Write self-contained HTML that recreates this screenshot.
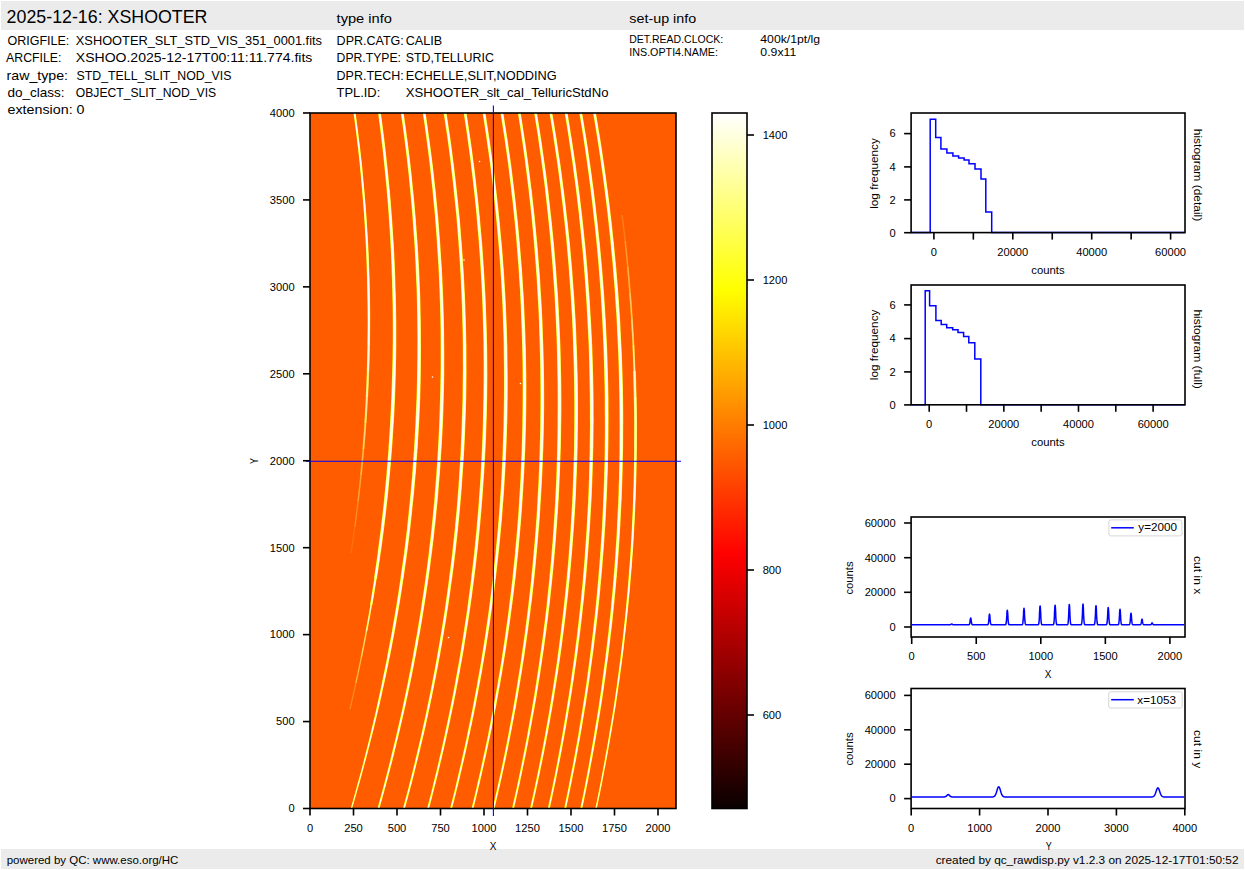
<!DOCTYPE html>
<html><head><meta charset="utf-8"><title>XSHOOTER raw display</title>
<style>html,body{margin:0;padding:0;background:#fff;width:1245px;height:870px;overflow:hidden}
svg text{font-family:"Liberation Sans",sans-serif;}</style></head>
<body>
<svg width="1245" height="870" viewBox="0 0 1245 870" style="display:block"><rect x="1" y="1" width="1243" height="29" fill="#ebebeb"/>
<rect x="1" y="849" width="1243" height="20" fill="#ebebeb"/>
<text x="6.60" y="22.80" font-size="17.66" textLength="200.87" lengthAdjust="spacingAndGlyphs" fill="#000">2025-12-16: XSHOOTER</text>
<text x="336.60" y="22.50" font-size="13.24" textLength="55.34" lengthAdjust="spacingAndGlyphs" fill="#000">type info</text>
<text x="629.30" y="22.70" font-size="13.24" textLength="66.89" lengthAdjust="spacingAndGlyphs" fill="#000">set-up info</text>
<text x="7.50" y="45.00" font-size="13.24" textLength="61.85" lengthAdjust="spacingAndGlyphs" fill="#000">ORIGFILE:</text>
<text x="75.80" y="45.00" font-size="13.24" textLength="246.15" lengthAdjust="spacingAndGlyphs" fill="#000">XSHOOTER_SLT_STD_VIS_351_0001.fits</text>
<text x="6.10" y="62.10" font-size="13.24" textLength="55.29" lengthAdjust="spacingAndGlyphs" fill="#000">ARCFILE:</text>
<text x="75.80" y="62.10" font-size="13.24" textLength="236.55" lengthAdjust="spacingAndGlyphs" fill="#000">XSHOO.2025-12-17T00:11:11.774.fits</text>
<text x="6.60" y="80.30" font-size="13.24" textLength="61.42" lengthAdjust="spacingAndGlyphs" fill="#000">raw_type:</text>
<text x="76.50" y="80.30" font-size="13.24" textLength="154.86" lengthAdjust="spacingAndGlyphs" fill="#000">STD_TELL_SLIT_NOD_VIS</text>
<text x="7.50" y="97.30" font-size="13.24" textLength="57.07" lengthAdjust="spacingAndGlyphs" fill="#000">do_class:</text>
<text x="75.80" y="97.30" font-size="13.24" textLength="140.33" lengthAdjust="spacingAndGlyphs" fill="#000">OBJECT_SLIT_NOD_VIS</text>
<text x="7.50" y="113.60" font-size="13.24" textLength="65.14" lengthAdjust="spacingAndGlyphs" fill="#000">extension:</text>
<text x="76.50" y="113.60" font-size="13.24" textLength="7.95" lengthAdjust="spacingAndGlyphs" fill="#000">0</text>
<text x="336.60" y="44.80" font-size="13.24" textLength="67.21" lengthAdjust="spacingAndGlyphs" fill="#000">DPR.CATG:</text>
<text x="405.70" y="44.80" font-size="13.24" textLength="36.50" lengthAdjust="spacingAndGlyphs" fill="#000">CALIB</text>
<text x="336.60" y="61.60" font-size="13.24" textLength="64.30" lengthAdjust="spacingAndGlyphs" fill="#000">DPR.TYPE:</text>
<text x="405.70" y="61.60" font-size="13.24" textLength="88.27" lengthAdjust="spacingAndGlyphs" fill="#000">STD,TELLURIC</text>
<text x="336.60" y="79.70" font-size="13.24" textLength="67.25" lengthAdjust="spacingAndGlyphs" fill="#000">DPR.TECH:</text>
<text x="405.70" y="79.70" font-size="13.24" textLength="151.08" lengthAdjust="spacingAndGlyphs" fill="#000">ECHELLE,SLIT,NODDING</text>
<text x="336.60" y="97.00" font-size="13.24" textLength="43.67" lengthAdjust="spacingAndGlyphs" fill="#000">TPL.ID:</text>
<text x="405.70" y="97.00" font-size="13.24" textLength="202.76" lengthAdjust="spacingAndGlyphs" fill="#000">XSHOOTER_slt_cal_TelluricStdNo</text>
<text x="629.30" y="42.90" font-size="11.04" textLength="93.87" lengthAdjust="spacingAndGlyphs" fill="#000">DET.READ.CLOCK:</text>
<text x="760.30" y="42.90" font-size="11.04" textLength="59.77" lengthAdjust="spacingAndGlyphs" fill="#000">400k/1pt/lg</text>
<text x="629.30" y="55.60" font-size="11.04" textLength="88.67" lengthAdjust="spacingAndGlyphs" fill="#000">INS.OPTI4.NAME:</text>
<text x="760.30" y="55.60" font-size="11.04" textLength="36.00" lengthAdjust="spacingAndGlyphs" fill="#000">0.9x11</text>
<text x="6.70" y="864.00" font-size="11.04" textLength="171.69" lengthAdjust="spacingAndGlyphs" fill="#000">powered by QC: www.eso.org/HC</text>
<text x="935.69" y="864.00" font-size="11.04" textLength="302.81" lengthAdjust="spacingAndGlyphs" fill="#000">created by qc_rawdisp.py v1.2.3 on 2025-12-17T01:50:52</text>
<defs><clipPath id="imgclip"><rect x="310.0" y="113.0" width="366.0" height="695.5"/></clipPath></defs>
<rect x="310.0" y="113.0" width="366.0" height="695.5" fill="#ff5c00"/>
<g clip-path="url(#imgclip)" fill="none" stroke-linecap="butt"><path d="M354.3 111.0Q356.1 124.0 357.7 137.0" stroke="#ffff00" stroke-opacity="1.00" stroke-width="2.13"/><path d="M354.3 111.0Q356.1 124.0 357.7 137.0" stroke="#fff" stroke-opacity="1.00" stroke-width="1.38"/><path d="M357.7 137.0Q359.3 150.0 360.7 163.0" stroke="#ffff00" stroke-opacity="1.00" stroke-width="2.20"/><path d="M357.7 137.0Q359.3 150.0 360.7 163.0" stroke="#fff" stroke-opacity="1.00" stroke-width="1.44"/><path d="M360.7 163.0Q362.0 176.0 363.1 189.0" stroke="#ffff00" stroke-opacity="1.00" stroke-width="2.26"/><path d="M360.7 163.0Q362.0 176.0 363.1 189.0" stroke="#fff" stroke-opacity="1.00" stroke-width="1.50"/><path d="M363.1 189.0Q364.3 202.0 365.2 215.0" stroke="#ffff00" stroke-opacity="1.00" stroke-width="2.33"/><path d="M363.1 189.0Q364.3 202.0 365.2 215.0" stroke="#fff" stroke-opacity="1.00" stroke-width="1.56"/><path d="M365.2 215.0Q366.1 228.0 366.8 241.0" stroke="#ffff00" stroke-opacity="1.00" stroke-width="2.40"/><path d="M365.2 215.0Q366.1 228.0 366.8 241.0" stroke="#fff" stroke-opacity="1.00" stroke-width="1.62"/><path d="M366.8 241.0Q367.5 254.0 367.9 267.0" stroke="#ffff00" stroke-opacity="1.00" stroke-width="2.47"/><path d="M366.8 241.0Q367.5 254.0 367.9 267.0" stroke="#fff" stroke-opacity="1.00" stroke-width="1.68"/><path d="M367.9 267.0Q368.4 280.0 368.6 293.0" stroke="#ffff00" stroke-opacity="1.00" stroke-width="2.54"/><path d="M367.9 267.0Q368.4 280.0 368.6 293.0" stroke="#fff" stroke-opacity="1.00" stroke-width="1.74"/><path d="M368.6 293.0Q368.9 306.0 368.9 319.0" stroke="#ffff00" stroke-opacity="1.00" stroke-width="2.58"/><path d="M368.6 293.0Q368.9 306.0 368.9 319.0" stroke="#fff" stroke-opacity="1.00" stroke-width="1.79"/><path d="M368.9 319.0Q368.9 332.0 368.7 345.0" stroke="#ffff00" stroke-opacity="0.99" stroke-width="2.53"/><path d="M368.9 319.0Q368.9 332.0 368.7 345.0" stroke="#fff" stroke-opacity="0.99" stroke-width="1.77"/><path d="M368.7 345.0Q368.5 358.0 368.0 371.0" stroke="#ffff00" stroke-opacity="0.86" stroke-width="2.48"/><path d="M368.7 345.0Q368.5 358.0 368.0 371.0" stroke="#fff" stroke-opacity="0.86" stroke-width="1.74"/><path d="M368.0 371.0Q367.6 384.0 366.9 397.0" stroke="#ffff00" stroke-opacity="0.73" stroke-width="2.42"/><path d="M368.0 371.0Q367.6 384.0 366.9 397.0" stroke="#fff" stroke-opacity="0.73" stroke-width="1.71"/><path d="M366.9 397.0Q366.3 410.0 365.4 423.0" stroke="#ffff00" stroke-opacity="0.60" stroke-width="2.30"/><path d="M366.9 397.0Q366.3 410.0 365.4 423.0" stroke="#fff" stroke-opacity="0.60" stroke-width="1.63"/><path d="M365.4 423.0Q364.5 436.0 363.4 449.0" stroke="#ffff00" stroke-opacity="0.47" stroke-width="2.12"/><path d="M365.4 423.0Q364.5 436.0 363.4 449.0" stroke="#fff" stroke-opacity="0.47" stroke-width="1.47"/><path d="M363.4 449.0Q362.3 462.0 361.0 475.0" stroke="#ffff00" stroke-opacity="0.34" stroke-width="1.94"/><path d="M363.4 449.0Q362.3 462.0 361.0 475.0" stroke="#fff" stroke-opacity="0.34" stroke-width="1.32"/><path d="M361.0 475.0Q359.7 488.0 358.1 501.0" stroke="#ffff00" stroke-opacity="0.25" stroke-width="1.78"/><path d="M361.0 475.0Q359.7 488.0 358.1 501.0" stroke="#fff" stroke-opacity="0.25" stroke-width="1.18"/><path d="M358.1 501.0Q356.6 514.0 354.8 527.0" stroke="#ffff00" stroke-opacity="0.16" stroke-width="1.67"/><path d="M358.1 501.0Q356.6 514.0 354.8 527.0" stroke="#fff" stroke-opacity="0.16" stroke-width="1.09"/><path d="M354.8 527.0Q353.0 540.0 351.0 553.0" stroke="#ffff00" stroke-opacity="0.07" stroke-width="1.62"/><path d="M354.8 527.0Q353.0 540.0 351.0 553.0" stroke="#fff" stroke-opacity="0.07" stroke-width="1.03"/><path d="M379.2 111.0Q381.0 124.0 382.6 137.0" stroke="#ffff00" stroke-opacity="1.00" stroke-width="2.84"/><path d="M379.2 111.0Q381.0 124.0 382.6 137.0" stroke="#fff" stroke-opacity="1.00" stroke-width="1.83"/><path d="M382.6 137.0Q384.2 150.0 385.5 163.0" stroke="#ffff00" stroke-opacity="1.00" stroke-width="2.93"/><path d="M382.6 137.0Q384.2 150.0 385.5 163.0" stroke="#fff" stroke-opacity="1.00" stroke-width="1.92"/><path d="M385.5 163.0Q386.9 176.0 388.1 189.0" stroke="#ffff00" stroke-opacity="1.00" stroke-width="3.02"/><path d="M385.5 163.0Q386.9 176.0 388.1 189.0" stroke="#fff" stroke-opacity="1.00" stroke-width="2.00"/><path d="M388.1 189.0Q389.3 202.0 390.2 215.0" stroke="#ffff00" stroke-opacity="1.00" stroke-width="3.11"/><path d="M388.1 189.0Q389.3 202.0 390.2 215.0" stroke="#fff" stroke-opacity="1.00" stroke-width="2.08"/><path d="M390.2 215.0Q391.2 228.0 391.9 241.0" stroke="#ffff00" stroke-opacity="1.00" stroke-width="3.20"/><path d="M390.2 215.0Q391.2 228.0 391.9 241.0" stroke="#fff" stroke-opacity="1.00" stroke-width="2.16"/><path d="M391.9 241.0Q392.7 254.0 393.2 267.0" stroke="#ffff00" stroke-opacity="1.00" stroke-width="3.29"/><path d="M391.9 241.0Q392.7 254.0 393.2 267.0" stroke="#fff" stroke-opacity="1.00" stroke-width="2.24"/><path d="M393.2 267.0Q393.7 280.0 394.0 293.0" stroke="#ffff00" stroke-opacity="1.00" stroke-width="3.38"/><path d="M393.2 267.0Q393.7 280.0 394.0 293.0" stroke="#fff" stroke-opacity="1.00" stroke-width="2.32"/><path d="M394.0 293.0Q394.4 306.0 394.5 319.0" stroke="#ffff00" stroke-opacity="1.00" stroke-width="3.47"/><path d="M394.0 293.0Q394.4 306.0 394.5 319.0" stroke="#fff" stroke-opacity="1.00" stroke-width="2.41"/><path d="M394.5 319.0Q394.6 332.0 394.5 345.0" stroke="#ffff00" stroke-opacity="1.00" stroke-width="3.56"/><path d="M394.5 319.0Q394.6 332.0 394.5 345.0" stroke="#fff" stroke-opacity="1.00" stroke-width="2.49"/><path d="M394.5 345.0Q394.4 358.0 394.0 371.0" stroke="#ffff00" stroke-opacity="1.00" stroke-width="3.65"/><path d="M394.5 345.0Q394.4 358.0 394.0 371.0" stroke="#fff" stroke-opacity="1.00" stroke-width="2.57"/><path d="M394.0 371.0Q393.7 384.0 393.2 397.0" stroke="#ffff00" stroke-opacity="1.00" stroke-width="3.74"/><path d="M394.0 371.0Q393.7 384.0 393.2 397.0" stroke="#fff" stroke-opacity="1.00" stroke-width="2.65"/><path d="M393.2 397.0Q392.7 410.0 391.9 423.0" stroke="#ffff00" stroke-opacity="1.00" stroke-width="3.76"/><path d="M393.2 397.0Q392.7 410.0 391.9 423.0" stroke="#fff" stroke-opacity="1.00" stroke-width="2.65"/><path d="M391.9 423.0Q391.2 436.0 390.2 449.0" stroke="#ffff00" stroke-opacity="1.00" stroke-width="3.66"/><path d="M391.9 423.0Q391.2 436.0 390.2 449.0" stroke="#fff" stroke-opacity="1.00" stroke-width="2.54"/><path d="M390.2 449.0Q389.3 462.0 388.1 475.0" stroke="#ffff00" stroke-opacity="1.00" stroke-width="3.55"/><path d="M390.2 449.0Q389.3 462.0 388.1 475.0" stroke="#fff" stroke-opacity="1.00" stroke-width="2.42"/><path d="M388.1 475.0Q387.0 488.0 385.6 501.0" stroke="#ffff00" stroke-opacity="1.00" stroke-width="3.45"/><path d="M388.1 475.0Q387.0 488.0 385.6 501.0" stroke="#fff" stroke-opacity="1.00" stroke-width="2.30"/><path d="M385.6 501.0Q384.2 514.0 382.6 527.0" stroke="#ffff00" stroke-opacity="1.00" stroke-width="3.34"/><path d="M385.6 501.0Q384.2 514.0 382.6 527.0" stroke="#fff" stroke-opacity="1.00" stroke-width="2.18"/><path d="M382.6 527.0Q381.0 540.0 379.2 553.0" stroke="#ffff00" stroke-opacity="1.00" stroke-width="3.24"/><path d="M382.6 527.0Q381.0 540.0 379.2 553.0" stroke="#fff" stroke-opacity="1.00" stroke-width="2.06"/><path d="M379.2 553.0Q377.4 566.0 375.4 579.0" stroke="#ffff00" stroke-opacity="1.00" stroke-width="3.01"/><path d="M379.2 553.0Q377.4 566.0 375.4 579.0" stroke="#fff" stroke-opacity="1.00" stroke-width="1.86"/><path d="M375.4 579.0Q373.4 592.0 371.2 605.0" stroke="#ffff00" stroke-opacity="1.00" stroke-width="2.37"/><path d="M375.4 579.0Q373.4 592.0 371.2 605.0" stroke="#fff" stroke-opacity="1.00" stroke-width="1.44"/><path d="M371.2 605.0Q369.0 618.0 366.5 631.0" stroke="#ffff00" stroke-opacity="0.82" stroke-width="1.77"/><path d="M371.2 605.0Q369.0 618.0 366.5 631.0" stroke="#fff" stroke-opacity="0.82" stroke-width="1.06"/><path d="M366.5 631.0Q364.1 644.0 361.4 657.0" stroke="#ffff00" stroke-opacity="0.57" stroke-width="1.52"/><path d="M366.5 631.0Q364.1 644.0 361.4 657.0" stroke="#fff" stroke-opacity="0.57" stroke-width="0.89"/><path d="M361.4 657.0Q358.8 670.0 355.9 683.0" stroke="#ffff00" stroke-opacity="0.38" stroke-width="1.45"/><path d="M361.4 657.0Q358.8 670.0 355.9 683.0" stroke="#fff" stroke-opacity="0.38" stroke-width="0.84"/><path d="M355.9 683.0Q353.1 696.0 350.0 709.0" stroke="#ffff00" stroke-opacity="0.18" stroke-width="1.39"/><path d="M355.9 683.0Q353.1 696.0 350.0 709.0" stroke="#fff" stroke-opacity="0.18" stroke-width="0.78"/><path d="M401.9 111.0Q403.9 124.0 405.6 137.0" stroke="#ffff00" stroke-opacity="1.00" stroke-width="2.84"/><path d="M401.9 111.0Q403.9 124.0 405.6 137.0" stroke="#fff" stroke-opacity="1.00" stroke-width="1.83"/><path d="M405.6 137.0Q407.3 150.0 408.8 163.0" stroke="#ffff00" stroke-opacity="1.00" stroke-width="2.93"/><path d="M405.6 137.0Q407.3 150.0 408.8 163.0" stroke="#fff" stroke-opacity="1.00" stroke-width="1.92"/><path d="M408.8 163.0Q410.3 176.0 411.5 189.0" stroke="#ffff00" stroke-opacity="1.00" stroke-width="3.02"/><path d="M408.8 163.0Q410.3 176.0 411.5 189.0" stroke="#fff" stroke-opacity="1.00" stroke-width="2.00"/><path d="M411.5 189.0Q412.8 202.0 413.9 215.0" stroke="#ffff00" stroke-opacity="1.00" stroke-width="3.11"/><path d="M411.5 189.0Q412.8 202.0 413.9 215.0" stroke="#fff" stroke-opacity="1.00" stroke-width="2.08"/><path d="M413.9 215.0Q414.9 228.0 415.8 241.0" stroke="#ffff00" stroke-opacity="1.00" stroke-width="3.20"/><path d="M413.9 215.0Q414.9 228.0 415.8 241.0" stroke="#fff" stroke-opacity="1.00" stroke-width="2.16"/><path d="M415.8 241.0Q416.7 254.0 417.3 267.0" stroke="#ffff00" stroke-opacity="1.00" stroke-width="3.29"/><path d="M415.8 241.0Q416.7 254.0 417.3 267.0" stroke="#fff" stroke-opacity="1.00" stroke-width="2.24"/><path d="M417.3 267.0Q417.9 280.0 418.4 293.0" stroke="#ffff00" stroke-opacity="1.00" stroke-width="3.38"/><path d="M417.3 267.0Q417.9 280.0 418.4 293.0" stroke="#fff" stroke-opacity="1.00" stroke-width="2.32"/><path d="M418.4 293.0Q418.8 306.0 419.0 319.0" stroke="#ffff00" stroke-opacity="1.00" stroke-width="3.47"/><path d="M418.4 293.0Q418.8 306.0 419.0 319.0" stroke="#fff" stroke-opacity="1.00" stroke-width="2.41"/><path d="M419.0 319.0Q419.2 332.0 419.2 345.0" stroke="#ffff00" stroke-opacity="1.00" stroke-width="3.56"/><path d="M419.0 319.0Q419.2 332.0 419.2 345.0" stroke="#fff" stroke-opacity="1.00" stroke-width="2.49"/><path d="M419.2 345.0Q419.2 358.0 419.0 371.0" stroke="#ffff00" stroke-opacity="1.00" stroke-width="3.65"/><path d="M419.2 345.0Q419.2 358.0 419.0 371.0" stroke="#fff" stroke-opacity="1.00" stroke-width="2.57"/><path d="M419.0 371.0Q418.8 384.0 418.4 397.0" stroke="#ffff00" stroke-opacity="1.00" stroke-width="3.74"/><path d="M419.0 371.0Q418.8 384.0 418.4 397.0" stroke="#fff" stroke-opacity="1.00" stroke-width="2.65"/><path d="M418.4 397.0Q417.9 410.0 417.3 423.0" stroke="#ffff00" stroke-opacity="1.00" stroke-width="3.76"/><path d="M418.4 397.0Q417.9 410.0 417.3 423.0" stroke="#fff" stroke-opacity="1.00" stroke-width="2.65"/><path d="M417.3 423.0Q416.6 436.0 415.8 449.0" stroke="#ffff00" stroke-opacity="1.00" stroke-width="3.66"/><path d="M417.3 423.0Q416.6 436.0 415.8 449.0" stroke="#fff" stroke-opacity="1.00" stroke-width="2.54"/><path d="M415.8 449.0Q414.9 462.0 413.9 475.0" stroke="#ffff00" stroke-opacity="1.00" stroke-width="3.55"/><path d="M415.8 449.0Q414.9 462.0 413.9 475.0" stroke="#fff" stroke-opacity="1.00" stroke-width="2.42"/><path d="M413.9 475.0Q412.8 488.0 411.5 501.0" stroke="#ffff00" stroke-opacity="1.00" stroke-width="3.45"/><path d="M413.9 475.0Q412.8 488.0 411.5 501.0" stroke="#fff" stroke-opacity="1.00" stroke-width="2.30"/><path d="M411.5 501.0Q410.2 514.0 408.8 527.0" stroke="#ffff00" stroke-opacity="1.00" stroke-width="3.34"/><path d="M411.5 501.0Q410.2 514.0 408.8 527.0" stroke="#fff" stroke-opacity="1.00" stroke-width="2.18"/><path d="M408.8 527.0Q407.3 540.0 405.6 553.0" stroke="#ffff00" stroke-opacity="1.00" stroke-width="3.24"/><path d="M408.8 527.0Q407.3 540.0 405.6 553.0" stroke="#fff" stroke-opacity="1.00" stroke-width="2.06"/><path d="M405.6 553.0Q403.8 566.0 401.9 579.0" stroke="#ffff00" stroke-opacity="1.00" stroke-width="3.14"/><path d="M405.6 553.0Q403.8 566.0 401.9 579.0" stroke="#fff" stroke-opacity="1.00" stroke-width="1.94"/><path d="M401.9 579.0Q400.0 592.0 397.9 605.0" stroke="#ffff00" stroke-opacity="1.00" stroke-width="3.02"/><path d="M401.9 579.0Q400.0 592.0 397.9 605.0" stroke="#fff" stroke-opacity="1.00" stroke-width="1.83"/><path d="M397.9 605.0Q395.7 618.0 393.4 631.0" stroke="#ffff00" stroke-opacity="1.00" stroke-width="2.89"/><path d="M397.9 605.0Q395.7 618.0 393.4 631.0" stroke="#fff" stroke-opacity="1.00" stroke-width="1.73"/><path d="M393.4 631.0Q391.0 644.0 388.5 657.0" stroke="#ffff00" stroke-opacity="1.00" stroke-width="2.77"/><path d="M393.4 631.0Q391.0 644.0 388.5 657.0" stroke="#fff" stroke-opacity="1.00" stroke-width="1.62"/><path d="M388.5 657.0Q385.9 670.0 383.1 683.0" stroke="#ffff00" stroke-opacity="1.00" stroke-width="2.54"/><path d="M388.5 657.0Q385.9 670.0 383.1 683.0" stroke="#fff" stroke-opacity="1.00" stroke-width="1.46"/><path d="M383.1 683.0Q380.4 696.0 377.4 709.0" stroke="#ffff00" stroke-opacity="1.00" stroke-width="2.30"/><path d="M383.1 683.0Q380.4 696.0 377.4 709.0" stroke="#fff" stroke-opacity="1.00" stroke-width="1.29"/><path d="M377.4 709.0Q374.4 722.0 371.2 735.0" stroke="#ffff00" stroke-opacity="1.00" stroke-width="2.07"/><path d="M377.4 709.0Q374.4 722.0 371.2 735.0" stroke="#fff" stroke-opacity="1.00" stroke-width="1.14"/><path d="M371.2 735.0Q368.0 748.0 364.6 761.0" stroke="#ffff00" stroke-opacity="1.00" stroke-width="1.86"/><path d="M371.2 735.0Q368.0 748.0 364.6 761.0" stroke="#fff" stroke-opacity="1.00" stroke-width="1.00"/><path d="M364.6 761.0Q361.2 774.0 357.5 787.0" stroke="#ffff00" stroke-opacity="1.00" stroke-width="1.66"/><path d="M364.6 761.0Q361.2 774.0 357.5 787.0" stroke="#fff" stroke-opacity="1.00" stroke-width="0.86"/><path d="M357.5 787.0Q353.9 800.0 350.1 813.0" stroke="#ffff00" stroke-opacity="1.00" stroke-width="1.46"/><path d="M357.5 787.0Q353.9 800.0 350.1 813.0" stroke="#fff" stroke-opacity="1.00" stroke-width="0.74"/><path d="M423.9 111.0Q425.9 124.0 427.6 137.0" stroke="#ffff00" stroke-opacity="1.00" stroke-width="2.84"/><path d="M423.9 111.0Q425.9 124.0 427.6 137.0" stroke="#fff" stroke-opacity="1.00" stroke-width="1.83"/><path d="M427.6 137.0Q429.4 150.0 431.0 163.0" stroke="#ffff00" stroke-opacity="1.00" stroke-width="2.93"/><path d="M427.6 137.0Q429.4 150.0 431.0 163.0" stroke="#fff" stroke-opacity="1.00" stroke-width="1.92"/><path d="M431.0 163.0Q432.5 176.0 433.9 189.0" stroke="#ffff00" stroke-opacity="1.00" stroke-width="3.02"/><path d="M431.0 163.0Q432.5 176.0 433.9 189.0" stroke="#fff" stroke-opacity="1.00" stroke-width="2.00"/><path d="M433.9 189.0Q435.2 202.0 436.4 215.0" stroke="#ffff00" stroke-opacity="1.00" stroke-width="3.11"/><path d="M433.9 189.0Q435.2 202.0 436.4 215.0" stroke="#fff" stroke-opacity="1.00" stroke-width="2.08"/><path d="M436.4 215.0Q437.5 228.0 438.4 241.0" stroke="#ffff00" stroke-opacity="1.00" stroke-width="3.20"/><path d="M436.4 215.0Q437.5 228.0 438.4 241.0" stroke="#fff" stroke-opacity="1.00" stroke-width="2.16"/><path d="M438.4 241.0Q439.3 254.0 440.1 267.0" stroke="#ffff00" stroke-opacity="1.00" stroke-width="3.29"/><path d="M438.4 241.0Q439.3 254.0 440.1 267.0" stroke="#fff" stroke-opacity="1.00" stroke-width="2.24"/><path d="M440.1 267.0Q440.8 280.0 441.3 293.0" stroke="#ffff00" stroke-opacity="1.00" stroke-width="3.38"/><path d="M440.1 267.0Q440.8 280.0 441.3 293.0" stroke="#fff" stroke-opacity="1.00" stroke-width="2.32"/><path d="M441.3 293.0Q441.8 306.0 442.1 319.0" stroke="#ffff00" stroke-opacity="1.00" stroke-width="3.47"/><path d="M441.3 293.0Q441.8 306.0 442.1 319.0" stroke="#fff" stroke-opacity="1.00" stroke-width="2.41"/><path d="M442.1 319.0Q442.4 332.0 442.4 345.0" stroke="#ffff00" stroke-opacity="1.00" stroke-width="3.56"/><path d="M442.1 319.0Q442.4 332.0 442.4 345.0" stroke="#fff" stroke-opacity="1.00" stroke-width="2.49"/><path d="M442.4 345.0Q442.5 358.0 442.4 371.0" stroke="#ffff00" stroke-opacity="1.00" stroke-width="3.65"/><path d="M442.4 345.0Q442.5 358.0 442.4 371.0" stroke="#fff" stroke-opacity="1.00" stroke-width="2.57"/><path d="M442.4 371.0Q442.3 384.0 441.9 397.0" stroke="#ffff00" stroke-opacity="1.00" stroke-width="3.74"/><path d="M442.4 371.0Q442.3 384.0 441.9 397.0" stroke="#fff" stroke-opacity="1.00" stroke-width="2.65"/><path d="M441.9 397.0Q441.6 410.0 441.1 423.0" stroke="#ffff00" stroke-opacity="1.00" stroke-width="3.76"/><path d="M441.9 397.0Q441.6 410.0 441.1 423.0" stroke="#fff" stroke-opacity="1.00" stroke-width="2.65"/><path d="M441.1 423.0Q440.5 436.0 439.7 449.0" stroke="#ffff00" stroke-opacity="1.00" stroke-width="3.66"/><path d="M441.1 423.0Q440.5 436.0 439.7 449.0" stroke="#fff" stroke-opacity="1.00" stroke-width="2.54"/><path d="M439.7 449.0Q439.0 462.0 438.0 475.0" stroke="#ffff00" stroke-opacity="1.00" stroke-width="3.55"/><path d="M439.7 449.0Q439.0 462.0 438.0 475.0" stroke="#fff" stroke-opacity="1.00" stroke-width="2.42"/><path d="M438.0 475.0Q437.0 488.0 435.9 501.0" stroke="#ffff00" stroke-opacity="1.00" stroke-width="3.45"/><path d="M438.0 475.0Q437.0 488.0 435.9 501.0" stroke="#fff" stroke-opacity="1.00" stroke-width="2.30"/><path d="M435.9 501.0Q434.7 514.0 433.3 527.0" stroke="#ffff00" stroke-opacity="1.00" stroke-width="3.34"/><path d="M435.9 501.0Q434.7 514.0 433.3 527.0" stroke="#fff" stroke-opacity="1.00" stroke-width="2.18"/><path d="M433.3 527.0Q431.9 540.0 430.3 553.0" stroke="#ffff00" stroke-opacity="1.00" stroke-width="3.24"/><path d="M433.3 527.0Q431.9 540.0 430.3 553.0" stroke="#fff" stroke-opacity="1.00" stroke-width="2.06"/><path d="M430.3 553.0Q428.7 566.0 426.9 579.0" stroke="#ffff00" stroke-opacity="1.00" stroke-width="3.14"/><path d="M430.3 553.0Q428.7 566.0 426.9 579.0" stroke="#fff" stroke-opacity="1.00" stroke-width="1.94"/><path d="M426.9 579.0Q425.1 592.0 423.0 605.0" stroke="#ffff00" stroke-opacity="1.00" stroke-width="3.02"/><path d="M426.9 579.0Q425.1 592.0 423.0 605.0" stroke="#fff" stroke-opacity="1.00" stroke-width="1.83"/><path d="M423.0 605.0Q421.0 618.0 418.8 631.0" stroke="#ffff00" stroke-opacity="1.00" stroke-width="2.89"/><path d="M423.0 605.0Q421.0 618.0 418.8 631.0" stroke="#fff" stroke-opacity="1.00" stroke-width="1.73"/><path d="M418.8 631.0Q416.5 644.0 414.1 657.0" stroke="#ffff00" stroke-opacity="1.00" stroke-width="2.77"/><path d="M418.8 631.0Q416.5 644.0 414.1 657.0" stroke="#fff" stroke-opacity="1.00" stroke-width="1.62"/><path d="M414.1 657.0Q411.7 670.0 409.0 683.0" stroke="#ffff00" stroke-opacity="1.00" stroke-width="2.64"/><path d="M414.1 657.0Q411.7 670.0 409.0 683.0" stroke="#fff" stroke-opacity="1.00" stroke-width="1.52"/><path d="M409.0 683.0Q406.3 696.0 403.5 709.0" stroke="#ffff00" stroke-opacity="1.00" stroke-width="2.52"/><path d="M409.0 683.0Q406.3 696.0 403.5 709.0" stroke="#fff" stroke-opacity="1.00" stroke-width="1.42"/><path d="M403.5 709.0Q400.6 722.0 397.5 735.0" stroke="#ffff00" stroke-opacity="1.00" stroke-width="2.40"/><path d="M403.5 709.0Q400.6 722.0 397.5 735.0" stroke="#fff" stroke-opacity="1.00" stroke-width="1.32"/><path d="M397.5 735.0Q394.4 748.0 391.2 761.0" stroke="#ffff00" stroke-opacity="1.00" stroke-width="2.28"/><path d="M397.5 735.0Q394.4 748.0 391.2 761.0" stroke="#fff" stroke-opacity="1.00" stroke-width="1.22"/><path d="M391.2 761.0Q387.9 774.0 384.4 787.0" stroke="#ffff00" stroke-opacity="1.00" stroke-width="2.16"/><path d="M391.2 761.0Q387.9 774.0 384.4 787.0" stroke="#fff" stroke-opacity="1.00" stroke-width="1.13"/><path d="M384.4 787.0Q380.9 800.0 377.2 813.0" stroke="#ffff00" stroke-opacity="1.00" stroke-width="2.04"/><path d="M384.4 787.0Q380.9 800.0 377.2 813.0" stroke="#fff" stroke-opacity="1.00" stroke-width="1.03"/><path d="M444.8 111.0Q446.8 124.0 448.7 137.0" stroke="#ffff00" stroke-opacity="1.00" stroke-width="2.84"/><path d="M444.8 111.0Q446.8 124.0 448.7 137.0" stroke="#fff" stroke-opacity="1.00" stroke-width="1.83"/><path d="M448.7 137.0Q450.5 150.0 452.1 163.0" stroke="#ffff00" stroke-opacity="1.00" stroke-width="2.93"/><path d="M448.7 137.0Q450.5 150.0 452.1 163.0" stroke="#fff" stroke-opacity="1.00" stroke-width="1.92"/><path d="M452.1 163.0Q453.7 176.0 455.1 189.0" stroke="#ffff00" stroke-opacity="1.00" stroke-width="3.02"/><path d="M452.1 163.0Q453.7 176.0 455.1 189.0" stroke="#fff" stroke-opacity="1.00" stroke-width="2.00"/><path d="M455.1 189.0Q456.5 202.0 457.8 215.0" stroke="#ffff00" stroke-opacity="1.00" stroke-width="3.11"/><path d="M455.1 189.0Q456.5 202.0 457.8 215.0" stroke="#fff" stroke-opacity="1.00" stroke-width="2.08"/><path d="M457.8 215.0Q459.0 228.0 459.9 241.0" stroke="#ffff00" stroke-opacity="1.00" stroke-width="3.20"/><path d="M457.8 215.0Q459.0 228.0 459.9 241.0" stroke="#fff" stroke-opacity="1.00" stroke-width="2.16"/><path d="M459.9 241.0Q460.9 254.0 461.7 267.0" stroke="#ffff00" stroke-opacity="1.00" stroke-width="3.29"/><path d="M459.9 241.0Q460.9 254.0 461.7 267.0" stroke="#fff" stroke-opacity="1.00" stroke-width="2.24"/><path d="M461.7 267.0Q462.5 280.0 463.1 293.0" stroke="#ffff00" stroke-opacity="1.00" stroke-width="3.38"/><path d="M461.7 267.0Q462.5 280.0 463.1 293.0" stroke="#fff" stroke-opacity="1.00" stroke-width="2.32"/><path d="M463.1 293.0Q463.7 306.0 464.0 319.0" stroke="#ffff00" stroke-opacity="1.00" stroke-width="3.47"/><path d="M463.1 293.0Q463.7 306.0 464.0 319.0" stroke="#fff" stroke-opacity="1.00" stroke-width="2.41"/><path d="M464.0 319.0Q464.4 332.0 464.6 345.0" stroke="#ffff00" stroke-opacity="1.00" stroke-width="3.56"/><path d="M464.0 319.0Q464.4 332.0 464.6 345.0" stroke="#fff" stroke-opacity="1.00" stroke-width="2.49"/><path d="M464.6 345.0Q464.7 358.0 464.7 371.0" stroke="#ffff00" stroke-opacity="1.00" stroke-width="3.65"/><path d="M464.6 345.0Q464.7 358.0 464.7 371.0" stroke="#fff" stroke-opacity="1.00" stroke-width="2.57"/><path d="M464.7 371.0Q464.6 384.0 464.4 397.0" stroke="#ffff00" stroke-opacity="1.00" stroke-width="3.74"/><path d="M464.7 371.0Q464.6 384.0 464.4 397.0" stroke="#fff" stroke-opacity="1.00" stroke-width="2.65"/><path d="M464.4 397.0Q464.1 410.0 463.6 423.0" stroke="#ffff00" stroke-opacity="1.00" stroke-width="3.76"/><path d="M464.4 397.0Q464.1 410.0 463.6 423.0" stroke="#fff" stroke-opacity="1.00" stroke-width="2.65"/><path d="M463.6 423.0Q463.2 436.0 462.5 449.0" stroke="#ffff00" stroke-opacity="1.00" stroke-width="3.66"/><path d="M463.6 423.0Q463.2 436.0 462.5 449.0" stroke="#fff" stroke-opacity="1.00" stroke-width="2.54"/><path d="M462.5 449.0Q461.8 462.0 460.9 475.0" stroke="#ffff00" stroke-opacity="1.00" stroke-width="3.55"/><path d="M462.5 449.0Q461.8 462.0 460.9 475.0" stroke="#fff" stroke-opacity="1.00" stroke-width="2.42"/><path d="M460.9 475.0Q460.1 488.0 459.0 501.0" stroke="#ffff00" stroke-opacity="1.00" stroke-width="3.45"/><path d="M460.9 475.0Q460.1 488.0 459.0 501.0" stroke="#fff" stroke-opacity="1.00" stroke-width="2.30"/><path d="M459.0 501.0Q457.9 514.0 456.6 527.0" stroke="#ffff00" stroke-opacity="1.00" stroke-width="3.34"/><path d="M459.0 501.0Q457.9 514.0 456.6 527.0" stroke="#fff" stroke-opacity="1.00" stroke-width="2.18"/><path d="M456.6 527.0Q455.3 540.0 453.8 553.0" stroke="#ffff00" stroke-opacity="1.00" stroke-width="3.24"/><path d="M456.6 527.0Q455.3 540.0 453.8 553.0" stroke="#fff" stroke-opacity="1.00" stroke-width="2.06"/><path d="M453.8 553.0Q452.3 566.0 450.5 579.0" stroke="#ffff00" stroke-opacity="1.00" stroke-width="3.14"/><path d="M453.8 553.0Q452.3 566.0 450.5 579.0" stroke="#fff" stroke-opacity="1.00" stroke-width="1.94"/><path d="M450.5 579.0Q448.8 592.0 446.9 605.0" stroke="#ffff00" stroke-opacity="1.00" stroke-width="3.02"/><path d="M450.5 579.0Q448.8 592.0 446.9 605.0" stroke="#fff" stroke-opacity="1.00" stroke-width="1.83"/><path d="M446.9 605.0Q445.0 618.0 442.8 631.0" stroke="#ffff00" stroke-opacity="1.00" stroke-width="2.89"/><path d="M446.9 605.0Q445.0 618.0 442.8 631.0" stroke="#fff" stroke-opacity="1.00" stroke-width="1.73"/><path d="M442.8 631.0Q440.7 644.0 438.3 657.0" stroke="#ffff00" stroke-opacity="1.00" stroke-width="2.77"/><path d="M442.8 631.0Q440.7 644.0 438.3 657.0" stroke="#fff" stroke-opacity="1.00" stroke-width="1.62"/><path d="M438.3 657.0Q436.0 670.0 433.4 683.0" stroke="#ffff00" stroke-opacity="1.00" stroke-width="2.64"/><path d="M438.3 657.0Q436.0 670.0 433.4 683.0" stroke="#fff" stroke-opacity="1.00" stroke-width="1.52"/><path d="M433.4 683.0Q430.9 696.0 428.1 709.0" stroke="#ffff00" stroke-opacity="1.00" stroke-width="2.52"/><path d="M433.4 683.0Q430.9 696.0 428.1 709.0" stroke="#fff" stroke-opacity="1.00" stroke-width="1.42"/><path d="M428.1 709.0Q425.4 722.0 422.4 735.0" stroke="#ffff00" stroke-opacity="1.00" stroke-width="2.40"/><path d="M428.1 709.0Q425.4 722.0 422.4 735.0" stroke="#fff" stroke-opacity="1.00" stroke-width="1.32"/><path d="M422.4 735.0Q419.4 748.0 416.2 761.0" stroke="#ffff00" stroke-opacity="1.00" stroke-width="2.28"/><path d="M422.4 735.0Q419.4 748.0 416.2 761.0" stroke="#fff" stroke-opacity="1.00" stroke-width="1.22"/><path d="M416.2 761.0Q413.1 774.0 409.7 787.0" stroke="#ffff00" stroke-opacity="1.00" stroke-width="2.16"/><path d="M416.2 761.0Q413.1 774.0 409.7 787.0" stroke="#fff" stroke-opacity="1.00" stroke-width="1.13"/><path d="M409.7 787.0Q406.3 800.0 402.7 813.0" stroke="#ffff00" stroke-opacity="1.00" stroke-width="2.04"/><path d="M409.7 787.0Q406.3 800.0 402.7 813.0" stroke="#fff" stroke-opacity="1.00" stroke-width="1.03"/><path d="M464.8 111.0Q466.9 124.0 468.7 137.0" stroke="#ffff00" stroke-opacity="1.00" stroke-width="2.84"/><path d="M464.8 111.0Q466.9 124.0 468.7 137.0" stroke="#fff" stroke-opacity="1.00" stroke-width="1.83"/><path d="M468.7 137.0Q470.6 150.0 472.2 163.0" stroke="#ffff00" stroke-opacity="1.00" stroke-width="2.93"/><path d="M468.7 137.0Q470.6 150.0 472.2 163.0" stroke="#fff" stroke-opacity="1.00" stroke-width="1.92"/><path d="M472.2 163.0Q473.9 176.0 475.3 189.0" stroke="#ffff00" stroke-opacity="1.00" stroke-width="3.02"/><path d="M472.2 163.0Q473.9 176.0 475.3 189.0" stroke="#fff" stroke-opacity="1.00" stroke-width="2.00"/><path d="M475.3 189.0Q476.8 202.0 478.0 215.0" stroke="#ffff00" stroke-opacity="1.00" stroke-width="3.11"/><path d="M475.3 189.0Q476.8 202.0 478.0 215.0" stroke="#fff" stroke-opacity="1.00" stroke-width="2.08"/><path d="M478.0 215.0Q479.2 228.0 480.3 241.0" stroke="#ffff00" stroke-opacity="1.00" stroke-width="3.20"/><path d="M478.0 215.0Q479.2 228.0 480.3 241.0" stroke="#fff" stroke-opacity="1.00" stroke-width="2.16"/><path d="M480.3 241.0Q481.3 254.0 482.1 267.0" stroke="#ffff00" stroke-opacity="1.00" stroke-width="3.29"/><path d="M480.3 241.0Q481.3 254.0 482.1 267.0" stroke="#fff" stroke-opacity="1.00" stroke-width="2.24"/><path d="M482.1 267.0Q483.0 280.0 483.6 293.0" stroke="#ffff00" stroke-opacity="1.00" stroke-width="3.38"/><path d="M482.1 267.0Q483.0 280.0 483.6 293.0" stroke="#fff" stroke-opacity="1.00" stroke-width="2.32"/><path d="M483.6 293.0Q484.2 306.0 484.6 319.0" stroke="#ffff00" stroke-opacity="1.00" stroke-width="3.47"/><path d="M483.6 293.0Q484.2 306.0 484.6 319.0" stroke="#fff" stroke-opacity="1.00" stroke-width="2.41"/><path d="M484.6 319.0Q485.1 332.0 485.3 345.0" stroke="#ffff00" stroke-opacity="1.00" stroke-width="3.56"/><path d="M484.6 319.0Q485.1 332.0 485.3 345.0" stroke="#fff" stroke-opacity="1.00" stroke-width="2.49"/><path d="M485.3 345.0Q485.5 358.0 485.5 371.0" stroke="#ffff00" stroke-opacity="1.00" stroke-width="3.65"/><path d="M485.3 345.0Q485.5 358.0 485.5 371.0" stroke="#fff" stroke-opacity="1.00" stroke-width="2.57"/><path d="M485.5 371.0Q485.5 384.0 485.3 397.0" stroke="#ffff00" stroke-opacity="1.00" stroke-width="3.74"/><path d="M485.5 371.0Q485.5 384.0 485.3 397.0" stroke="#fff" stroke-opacity="1.00" stroke-width="2.65"/><path d="M485.3 397.0Q485.1 410.0 484.7 423.0" stroke="#ffff00" stroke-opacity="1.00" stroke-width="3.76"/><path d="M485.3 397.0Q485.1 410.0 484.7 423.0" stroke="#fff" stroke-opacity="1.00" stroke-width="2.65"/><path d="M484.7 423.0Q484.3 436.0 483.7 449.0" stroke="#ffff00" stroke-opacity="1.00" stroke-width="3.66"/><path d="M484.7 423.0Q484.3 436.0 483.7 449.0" stroke="#fff" stroke-opacity="1.00" stroke-width="2.54"/><path d="M483.7 449.0Q483.1 462.0 482.3 475.0" stroke="#ffff00" stroke-opacity="1.00" stroke-width="3.55"/><path d="M483.7 449.0Q483.1 462.0 482.3 475.0" stroke="#fff" stroke-opacity="1.00" stroke-width="2.42"/><path d="M482.3 475.0Q481.5 488.0 480.5 501.0" stroke="#ffff00" stroke-opacity="1.00" stroke-width="3.45"/><path d="M482.3 475.0Q481.5 488.0 480.5 501.0" stroke="#fff" stroke-opacity="1.00" stroke-width="2.30"/><path d="M480.5 501.0Q479.5 514.0 478.3 527.0" stroke="#ffff00" stroke-opacity="1.00" stroke-width="3.34"/><path d="M480.5 501.0Q479.5 514.0 478.3 527.0" stroke="#fff" stroke-opacity="1.00" stroke-width="2.18"/><path d="M478.3 527.0Q477.1 540.0 475.7 553.0" stroke="#ffff00" stroke-opacity="1.00" stroke-width="3.24"/><path d="M478.3 527.0Q477.1 540.0 475.7 553.0" stroke="#fff" stroke-opacity="1.00" stroke-width="2.06"/><path d="M475.7 553.0Q474.3 566.0 472.6 579.0" stroke="#ffff00" stroke-opacity="1.00" stroke-width="3.14"/><path d="M475.7 553.0Q474.3 566.0 472.6 579.0" stroke="#fff" stroke-opacity="1.00" stroke-width="1.94"/><path d="M472.6 579.0Q471.0 592.0 469.2 605.0" stroke="#ffff00" stroke-opacity="1.00" stroke-width="3.02"/><path d="M472.6 579.0Q471.0 592.0 469.2 605.0" stroke="#fff" stroke-opacity="1.00" stroke-width="1.83"/><path d="M469.2 605.0Q467.4 618.0 465.3 631.0" stroke="#ffff00" stroke-opacity="1.00" stroke-width="2.89"/><path d="M469.2 605.0Q467.4 618.0 465.3 631.0" stroke="#fff" stroke-opacity="1.00" stroke-width="1.73"/><path d="M465.3 631.0Q463.3 644.0 461.1 657.0" stroke="#ffff00" stroke-opacity="1.00" stroke-width="2.77"/><path d="M465.3 631.0Q463.3 644.0 461.1 657.0" stroke="#fff" stroke-opacity="1.00" stroke-width="1.62"/><path d="M461.1 657.0Q458.8 670.0 456.4 683.0" stroke="#ffff00" stroke-opacity="1.00" stroke-width="2.64"/><path d="M461.1 657.0Q458.8 670.0 456.4 683.0" stroke="#fff" stroke-opacity="1.00" stroke-width="1.52"/><path d="M456.4 683.0Q454.0 696.0 451.3 709.0" stroke="#ffff00" stroke-opacity="1.00" stroke-width="2.52"/><path d="M456.4 683.0Q454.0 696.0 451.3 709.0" stroke="#fff" stroke-opacity="1.00" stroke-width="1.42"/><path d="M451.3 709.0Q448.7 722.0 445.8 735.0" stroke="#ffff00" stroke-opacity="1.00" stroke-width="2.40"/><path d="M451.3 709.0Q448.7 722.0 445.8 735.0" stroke="#fff" stroke-opacity="1.00" stroke-width="1.32"/><path d="M445.8 735.0Q443.0 748.0 439.9 761.0" stroke="#ffff00" stroke-opacity="1.00" stroke-width="2.28"/><path d="M445.8 735.0Q443.0 748.0 439.9 761.0" stroke="#fff" stroke-opacity="1.00" stroke-width="1.22"/><path d="M439.9 761.0Q436.9 774.0 433.6 787.0" stroke="#ffff00" stroke-opacity="1.00" stroke-width="2.16"/><path d="M439.9 761.0Q436.9 774.0 433.6 787.0" stroke="#fff" stroke-opacity="1.00" stroke-width="1.13"/><path d="M433.6 787.0Q430.4 800.0 426.9 813.0" stroke="#ffff00" stroke-opacity="1.00" stroke-width="2.04"/><path d="M433.6 787.0Q430.4 800.0 426.9 813.0" stroke="#fff" stroke-opacity="1.00" stroke-width="1.03"/><path d="M483.7 111.0Q485.8 124.0 487.7 137.0" stroke="#ffff00" stroke-opacity="1.00" stroke-width="2.84"/><path d="M483.7 111.0Q485.8 124.0 487.7 137.0" stroke="#fff" stroke-opacity="1.00" stroke-width="1.83"/><path d="M487.7 137.0Q489.6 150.0 491.4 163.0" stroke="#ffff00" stroke-opacity="1.00" stroke-width="2.93"/><path d="M487.7 137.0Q489.6 150.0 491.4 163.0" stroke="#fff" stroke-opacity="1.00" stroke-width="1.92"/><path d="M491.4 163.0Q493.1 176.0 494.6 189.0" stroke="#ffff00" stroke-opacity="1.00" stroke-width="3.02"/><path d="M491.4 163.0Q493.1 176.0 494.6 189.0" stroke="#fff" stroke-opacity="1.00" stroke-width="2.00"/><path d="M494.6 189.0Q496.1 202.0 497.4 215.0" stroke="#ffff00" stroke-opacity="1.00" stroke-width="3.11"/><path d="M494.6 189.0Q496.1 202.0 497.4 215.0" stroke="#fff" stroke-opacity="1.00" stroke-width="2.08"/><path d="M497.4 215.0Q498.7 228.0 499.8 241.0" stroke="#ffff00" stroke-opacity="1.00" stroke-width="3.20"/><path d="M497.4 215.0Q498.7 228.0 499.8 241.0" stroke="#fff" stroke-opacity="1.00" stroke-width="2.16"/><path d="M499.8 241.0Q501.0 254.0 501.9 267.0" stroke="#ffff00" stroke-opacity="1.00" stroke-width="3.29"/><path d="M499.8 241.0Q501.0 254.0 501.9 267.0" stroke="#fff" stroke-opacity="1.00" stroke-width="2.24"/><path d="M501.9 267.0Q502.8 280.0 503.5 293.0" stroke="#ffff00" stroke-opacity="1.00" stroke-width="3.38"/><path d="M501.9 267.0Q502.8 280.0 503.5 293.0" stroke="#fff" stroke-opacity="1.00" stroke-width="2.32"/><path d="M503.5 293.0Q504.2 306.0 504.7 319.0" stroke="#ffff00" stroke-opacity="1.00" stroke-width="3.47"/><path d="M503.5 293.0Q504.2 306.0 504.7 319.0" stroke="#fff" stroke-opacity="1.00" stroke-width="2.41"/><path d="M504.7 319.0Q505.2 332.0 505.5 345.0" stroke="#ffff00" stroke-opacity="1.00" stroke-width="3.56"/><path d="M504.7 319.0Q505.2 332.0 505.5 345.0" stroke="#fff" stroke-opacity="1.00" stroke-width="2.49"/><path d="M505.5 345.0Q505.7 358.0 505.8 371.0" stroke="#ffff00" stroke-opacity="1.00" stroke-width="3.65"/><path d="M505.5 345.0Q505.7 358.0 505.8 371.0" stroke="#fff" stroke-opacity="1.00" stroke-width="2.57"/><path d="M505.8 371.0Q505.9 384.0 505.8 397.0" stroke="#ffff00" stroke-opacity="1.00" stroke-width="3.74"/><path d="M505.8 371.0Q505.9 384.0 505.8 397.0" stroke="#fff" stroke-opacity="1.00" stroke-width="2.65"/><path d="M505.8 397.0Q505.7 410.0 505.4 423.0" stroke="#ffff00" stroke-opacity="1.00" stroke-width="3.76"/><path d="M505.8 397.0Q505.7 410.0 505.4 423.0" stroke="#fff" stroke-opacity="1.00" stroke-width="2.65"/><path d="M505.4 423.0Q505.1 436.0 504.5 449.0" stroke="#ffff00" stroke-opacity="1.00" stroke-width="3.66"/><path d="M505.4 423.0Q505.1 436.0 504.5 449.0" stroke="#fff" stroke-opacity="1.00" stroke-width="2.54"/><path d="M504.5 449.0Q504.0 462.0 503.3 475.0" stroke="#ffff00" stroke-opacity="1.00" stroke-width="3.55"/><path d="M504.5 449.0Q504.0 462.0 503.3 475.0" stroke="#fff" stroke-opacity="1.00" stroke-width="2.42"/><path d="M503.3 475.0Q502.6 488.0 501.6 501.0" stroke="#ffff00" stroke-opacity="1.00" stroke-width="3.45"/><path d="M503.3 475.0Q502.6 488.0 501.6 501.0" stroke="#fff" stroke-opacity="1.00" stroke-width="2.30"/><path d="M501.6 501.0Q500.7 514.0 499.6 527.0" stroke="#ffff00" stroke-opacity="1.00" stroke-width="3.34"/><path d="M501.6 501.0Q500.7 514.0 499.6 527.0" stroke="#fff" stroke-opacity="1.00" stroke-width="2.18"/><path d="M499.6 527.0Q498.4 540.0 497.1 553.0" stroke="#ffff00" stroke-opacity="1.00" stroke-width="3.24"/><path d="M499.6 527.0Q498.4 540.0 497.1 553.0" stroke="#fff" stroke-opacity="1.00" stroke-width="2.06"/><path d="M497.1 553.0Q495.7 566.0 494.2 579.0" stroke="#ffff00" stroke-opacity="1.00" stroke-width="3.14"/><path d="M497.1 553.0Q495.7 566.0 494.2 579.0" stroke="#fff" stroke-opacity="1.00" stroke-width="1.94"/><path d="M494.2 579.0Q492.7 592.0 490.9 605.0" stroke="#ffff00" stroke-opacity="1.00" stroke-width="3.02"/><path d="M494.2 579.0Q492.7 592.0 490.9 605.0" stroke="#fff" stroke-opacity="1.00" stroke-width="1.83"/><path d="M490.9 605.0Q489.2 618.0 487.2 631.0" stroke="#ffff00" stroke-opacity="1.00" stroke-width="2.89"/><path d="M490.9 605.0Q489.2 618.0 487.2 631.0" stroke="#fff" stroke-opacity="1.00" stroke-width="1.73"/><path d="M487.2 631.0Q485.3 644.0 483.1 657.0" stroke="#ffff00" stroke-opacity="1.00" stroke-width="2.77"/><path d="M487.2 631.0Q485.3 644.0 483.1 657.0" stroke="#fff" stroke-opacity="1.00" stroke-width="1.62"/><path d="M483.1 657.0Q481.0 670.0 478.6 683.0" stroke="#ffff00" stroke-opacity="1.00" stroke-width="2.64"/><path d="M483.1 657.0Q481.0 670.0 478.6 683.0" stroke="#fff" stroke-opacity="1.00" stroke-width="1.52"/><path d="M478.6 683.0Q476.2 696.0 473.7 709.0" stroke="#ffff00" stroke-opacity="1.00" stroke-width="2.52"/><path d="M478.6 683.0Q476.2 696.0 473.7 709.0" stroke="#fff" stroke-opacity="1.00" stroke-width="1.42"/><path d="M473.7 709.0Q471.1 722.0 468.3 735.0" stroke="#ffff00" stroke-opacity="1.00" stroke-width="2.40"/><path d="M473.7 709.0Q471.1 722.0 468.3 735.0" stroke="#fff" stroke-opacity="1.00" stroke-width="1.32"/><path d="M468.3 735.0Q465.6 748.0 462.6 761.0" stroke="#ffff00" stroke-opacity="1.00" stroke-width="2.28"/><path d="M468.3 735.0Q465.6 748.0 462.6 761.0" stroke="#fff" stroke-opacity="1.00" stroke-width="1.22"/><path d="M462.6 761.0Q459.6 774.0 456.5 787.0" stroke="#ffff00" stroke-opacity="1.00" stroke-width="2.16"/><path d="M462.6 761.0Q459.6 774.0 456.5 787.0" stroke="#fff" stroke-opacity="1.00" stroke-width="1.13"/><path d="M456.5 787.0Q453.3 800.0 449.9 813.0" stroke="#ffff00" stroke-opacity="1.00" stroke-width="2.04"/><path d="M456.5 787.0Q453.3 800.0 449.9 813.0" stroke="#fff" stroke-opacity="1.00" stroke-width="1.03"/><path d="M501.6 111.0Q503.7 124.0 505.7 137.0" stroke="#ffff00" stroke-opacity="1.00" stroke-width="2.84"/><path d="M501.6 111.0Q503.7 124.0 505.7 137.0" stroke="#fff" stroke-opacity="1.00" stroke-width="1.83"/><path d="M505.7 137.0Q507.6 150.0 509.4 163.0" stroke="#ffff00" stroke-opacity="1.00" stroke-width="2.93"/><path d="M505.7 137.0Q507.6 150.0 509.4 163.0" stroke="#fff" stroke-opacity="1.00" stroke-width="1.92"/><path d="M509.4 163.0Q511.1 176.0 512.6 189.0" stroke="#ffff00" stroke-opacity="1.00" stroke-width="3.02"/><path d="M509.4 163.0Q511.1 176.0 512.6 189.0" stroke="#fff" stroke-opacity="1.00" stroke-width="2.00"/><path d="M512.6 189.0Q514.2 202.0 515.5 215.0" stroke="#ffff00" stroke-opacity="1.00" stroke-width="3.11"/><path d="M512.6 189.0Q514.2 202.0 515.5 215.0" stroke="#fff" stroke-opacity="1.00" stroke-width="2.08"/><path d="M515.5 215.0Q516.9 228.0 518.0 241.0" stroke="#ffff00" stroke-opacity="1.00" stroke-width="3.20"/><path d="M515.5 215.0Q516.9 228.0 518.0 241.0" stroke="#fff" stroke-opacity="1.00" stroke-width="2.16"/><path d="M518.0 241.0Q519.1 254.0 520.1 267.0" stroke="#ffff00" stroke-opacity="1.00" stroke-width="3.29"/><path d="M518.0 241.0Q519.1 254.0 520.1 267.0" stroke="#fff" stroke-opacity="1.00" stroke-width="2.24"/><path d="M520.1 267.0Q521.0 280.0 521.8 293.0" stroke="#ffff00" stroke-opacity="1.00" stroke-width="3.38"/><path d="M520.1 267.0Q521.0 280.0 521.8 293.0" stroke="#fff" stroke-opacity="1.00" stroke-width="2.32"/><path d="M521.8 293.0Q522.5 306.0 523.0 319.0" stroke="#ffff00" stroke-opacity="1.00" stroke-width="3.47"/><path d="M521.8 293.0Q522.5 306.0 523.0 319.0" stroke="#fff" stroke-opacity="1.00" stroke-width="2.41"/><path d="M523.0 319.0Q523.6 332.0 523.9 345.0" stroke="#ffff00" stroke-opacity="1.00" stroke-width="3.56"/><path d="M523.0 319.0Q523.6 332.0 523.9 345.0" stroke="#fff" stroke-opacity="1.00" stroke-width="2.49"/><path d="M523.9 345.0Q524.3 358.0 524.4 371.0" stroke="#ffff00" stroke-opacity="1.00" stroke-width="3.65"/><path d="M523.9 345.0Q524.3 358.0 524.4 371.0" stroke="#fff" stroke-opacity="1.00" stroke-width="2.57"/><path d="M524.4 371.0Q524.6 384.0 524.5 397.0" stroke="#ffff00" stroke-opacity="1.00" stroke-width="3.74"/><path d="M524.4 371.0Q524.6 384.0 524.5 397.0" stroke="#fff" stroke-opacity="1.00" stroke-width="2.65"/><path d="M524.5 397.0Q524.4 410.0 524.2 423.0" stroke="#ffff00" stroke-opacity="1.00" stroke-width="3.76"/><path d="M524.5 397.0Q524.4 410.0 524.2 423.0" stroke="#fff" stroke-opacity="1.00" stroke-width="2.65"/><path d="M524.2 423.0Q523.9 436.0 523.5 449.0" stroke="#ffff00" stroke-opacity="1.00" stroke-width="3.66"/><path d="M524.2 423.0Q523.9 436.0 523.5 449.0" stroke="#fff" stroke-opacity="1.00" stroke-width="2.54"/><path d="M523.5 449.0Q523.0 462.0 522.3 475.0" stroke="#ffff00" stroke-opacity="1.00" stroke-width="3.55"/><path d="M523.5 449.0Q523.0 462.0 522.3 475.0" stroke="#fff" stroke-opacity="1.00" stroke-width="2.42"/><path d="M522.3 475.0Q521.7 488.0 520.8 501.0" stroke="#ffff00" stroke-opacity="1.00" stroke-width="3.45"/><path d="M522.3 475.0Q521.7 488.0 520.8 501.0" stroke="#fff" stroke-opacity="1.00" stroke-width="2.30"/><path d="M520.8 501.0Q520.0 514.0 518.9 527.0" stroke="#ffff00" stroke-opacity="1.00" stroke-width="3.34"/><path d="M520.8 501.0Q520.0 514.0 518.9 527.0" stroke="#fff" stroke-opacity="1.00" stroke-width="2.18"/><path d="M518.9 527.0Q517.8 540.0 516.6 553.0" stroke="#ffff00" stroke-opacity="1.00" stroke-width="3.24"/><path d="M518.9 527.0Q517.8 540.0 516.6 553.0" stroke="#fff" stroke-opacity="1.00" stroke-width="2.06"/><path d="M516.6 553.0Q515.3 566.0 513.9 579.0" stroke="#ffff00" stroke-opacity="1.00" stroke-width="3.14"/><path d="M516.6 553.0Q515.3 566.0 513.9 579.0" stroke="#fff" stroke-opacity="1.00" stroke-width="1.94"/><path d="M513.9 579.0Q512.4 592.0 510.7 605.0" stroke="#ffff00" stroke-opacity="1.00" stroke-width="3.02"/><path d="M513.9 579.0Q512.4 592.0 510.7 605.0" stroke="#fff" stroke-opacity="1.00" stroke-width="1.83"/><path d="M510.7 605.0Q509.1 618.0 507.2 631.0" stroke="#ffff00" stroke-opacity="1.00" stroke-width="2.89"/><path d="M510.7 605.0Q509.1 618.0 507.2 631.0" stroke="#fff" stroke-opacity="1.00" stroke-width="1.73"/><path d="M507.2 631.0Q505.4 644.0 503.3 657.0" stroke="#ffff00" stroke-opacity="1.00" stroke-width="2.77"/><path d="M507.2 631.0Q505.4 644.0 503.3 657.0" stroke="#fff" stroke-opacity="1.00" stroke-width="1.62"/><path d="M503.3 657.0Q501.3 670.0 499.0 683.0" stroke="#ffff00" stroke-opacity="1.00" stroke-width="2.64"/><path d="M503.3 657.0Q501.3 670.0 499.0 683.0" stroke="#fff" stroke-opacity="1.00" stroke-width="1.52"/><path d="M499.0 683.0Q496.7 696.0 494.3 709.0" stroke="#ffff00" stroke-opacity="1.00" stroke-width="2.52"/><path d="M499.0 683.0Q496.7 696.0 494.3 709.0" stroke="#fff" stroke-opacity="1.00" stroke-width="1.42"/><path d="M494.3 709.0Q491.8 722.0 489.2 735.0" stroke="#ffff00" stroke-opacity="1.00" stroke-width="2.40"/><path d="M494.3 709.0Q491.8 722.0 489.2 735.0" stroke="#fff" stroke-opacity="1.00" stroke-width="1.32"/><path d="M489.2 735.0Q486.5 748.0 483.6 761.0" stroke="#ffff00" stroke-opacity="1.00" stroke-width="2.28"/><path d="M489.2 735.0Q486.5 748.0 483.6 761.0" stroke="#fff" stroke-opacity="1.00" stroke-width="1.22"/><path d="M483.6 761.0Q480.8 774.0 477.7 787.0" stroke="#ffff00" stroke-opacity="1.00" stroke-width="2.16"/><path d="M483.6 761.0Q480.8 774.0 477.7 787.0" stroke="#fff" stroke-opacity="1.00" stroke-width="1.13"/><path d="M477.7 787.0Q474.7 800.0 471.4 813.0" stroke="#ffff00" stroke-opacity="1.00" stroke-width="2.04"/><path d="M477.7 787.0Q474.7 800.0 471.4 813.0" stroke="#fff" stroke-opacity="1.00" stroke-width="1.03"/><path d="M519.0 111.0Q521.1 124.0 523.0 137.0" stroke="#ffff00" stroke-opacity="1.00" stroke-width="2.84"/><path d="M519.0 111.0Q521.1 124.0 523.0 137.0" stroke="#fff" stroke-opacity="1.00" stroke-width="1.83"/><path d="M523.0 137.0Q525.0 150.0 526.7 163.0" stroke="#ffff00" stroke-opacity="1.00" stroke-width="2.93"/><path d="M523.0 137.0Q525.0 150.0 526.7 163.0" stroke="#fff" stroke-opacity="1.00" stroke-width="1.92"/><path d="M526.7 163.0Q528.4 176.0 530.0 189.0" stroke="#ffff00" stroke-opacity="1.00" stroke-width="3.02"/><path d="M526.7 163.0Q528.4 176.0 530.0 189.0" stroke="#fff" stroke-opacity="1.00" stroke-width="2.00"/><path d="M530.0 189.0Q531.5 202.0 532.9 215.0" stroke="#ffff00" stroke-opacity="1.00" stroke-width="3.11"/><path d="M530.0 189.0Q531.5 202.0 532.9 215.0" stroke="#fff" stroke-opacity="1.00" stroke-width="2.08"/><path d="M532.9 215.0Q534.2 228.0 535.4 241.0" stroke="#ffff00" stroke-opacity="1.00" stroke-width="3.20"/><path d="M532.9 215.0Q534.2 228.0 535.4 241.0" stroke="#fff" stroke-opacity="1.00" stroke-width="2.16"/><path d="M535.4 241.0Q536.5 254.0 537.5 267.0" stroke="#ffff00" stroke-opacity="1.00" stroke-width="3.29"/><path d="M535.4 241.0Q536.5 254.0 537.5 267.0" stroke="#fff" stroke-opacity="1.00" stroke-width="2.24"/><path d="M537.5 267.0Q538.5 280.0 539.2 293.0" stroke="#ffff00" stroke-opacity="1.00" stroke-width="3.38"/><path d="M537.5 267.0Q538.5 280.0 539.2 293.0" stroke="#fff" stroke-opacity="1.00" stroke-width="2.32"/><path d="M539.2 293.0Q540.0 306.0 540.6 319.0" stroke="#ffff00" stroke-opacity="1.00" stroke-width="3.47"/><path d="M539.2 293.0Q540.0 306.0 540.6 319.0" stroke="#fff" stroke-opacity="1.00" stroke-width="2.41"/><path d="M540.6 319.0Q541.1 332.0 541.5 345.0" stroke="#ffff00" stroke-opacity="1.00" stroke-width="3.56"/><path d="M540.6 319.0Q541.1 332.0 541.5 345.0" stroke="#fff" stroke-opacity="1.00" stroke-width="2.49"/><path d="M541.5 345.0Q541.9 358.0 542.1 371.0" stroke="#ffff00" stroke-opacity="1.00" stroke-width="3.65"/><path d="M541.5 345.0Q541.9 358.0 542.1 371.0" stroke="#fff" stroke-opacity="1.00" stroke-width="2.57"/><path d="M542.1 371.0Q542.3 384.0 542.3 397.0" stroke="#ffff00" stroke-opacity="1.00" stroke-width="3.74"/><path d="M542.1 371.0Q542.3 384.0 542.3 397.0" stroke="#fff" stroke-opacity="1.00" stroke-width="2.65"/><path d="M542.3 397.0Q542.3 410.0 542.1 423.0" stroke="#ffff00" stroke-opacity="1.00" stroke-width="3.76"/><path d="M542.3 397.0Q542.3 410.0 542.1 423.0" stroke="#fff" stroke-opacity="1.00" stroke-width="2.65"/><path d="M542.1 423.0Q541.9 436.0 541.5 449.0" stroke="#ffff00" stroke-opacity="1.00" stroke-width="3.66"/><path d="M542.1 423.0Q541.9 436.0 541.5 449.0" stroke="#fff" stroke-opacity="1.00" stroke-width="2.54"/><path d="M541.5 449.0Q541.1 462.0 540.5 475.0" stroke="#ffff00" stroke-opacity="1.00" stroke-width="3.55"/><path d="M541.5 449.0Q541.1 462.0 540.5 475.0" stroke="#fff" stroke-opacity="1.00" stroke-width="2.42"/><path d="M540.5 475.0Q539.9 488.0 539.1 501.0" stroke="#ffff00" stroke-opacity="1.00" stroke-width="3.45"/><path d="M540.5 475.0Q539.9 488.0 539.1 501.0" stroke="#fff" stroke-opacity="1.00" stroke-width="2.30"/><path d="M539.1 501.0Q538.4 514.0 537.4 527.0" stroke="#ffff00" stroke-opacity="1.00" stroke-width="3.34"/><path d="M539.1 501.0Q538.4 514.0 537.4 527.0" stroke="#fff" stroke-opacity="1.00" stroke-width="2.18"/><path d="M537.4 527.0Q536.4 540.0 535.2 553.0" stroke="#ffff00" stroke-opacity="1.00" stroke-width="3.24"/><path d="M537.4 527.0Q536.4 540.0 535.2 553.0" stroke="#fff" stroke-opacity="1.00" stroke-width="2.06"/><path d="M535.2 553.0Q534.1 566.0 532.7 579.0" stroke="#ffff00" stroke-opacity="1.00" stroke-width="3.14"/><path d="M535.2 553.0Q534.1 566.0 532.7 579.0" stroke="#fff" stroke-opacity="1.00" stroke-width="1.94"/><path d="M532.7 579.0Q531.4 592.0 529.8 605.0" stroke="#ffff00" stroke-opacity="1.00" stroke-width="3.02"/><path d="M532.7 579.0Q531.4 592.0 529.8 605.0" stroke="#fff" stroke-opacity="1.00" stroke-width="1.83"/><path d="M529.8 605.0Q528.2 618.0 526.5 631.0" stroke="#ffff00" stroke-opacity="1.00" stroke-width="2.89"/><path d="M529.8 605.0Q528.2 618.0 526.5 631.0" stroke="#fff" stroke-opacity="1.00" stroke-width="1.73"/><path d="M526.5 631.0Q524.7 644.0 522.8 657.0" stroke="#ffff00" stroke-opacity="1.00" stroke-width="2.77"/><path d="M526.5 631.0Q524.7 644.0 522.8 657.0" stroke="#fff" stroke-opacity="1.00" stroke-width="1.62"/><path d="M522.8 657.0Q520.9 670.0 518.7 683.0" stroke="#ffff00" stroke-opacity="1.00" stroke-width="2.64"/><path d="M522.8 657.0Q520.9 670.0 518.7 683.0" stroke="#fff" stroke-opacity="1.00" stroke-width="1.52"/><path d="M518.7 683.0Q516.6 696.0 514.3 709.0" stroke="#ffff00" stroke-opacity="1.00" stroke-width="2.52"/><path d="M518.7 683.0Q516.6 696.0 514.3 709.0" stroke="#fff" stroke-opacity="1.00" stroke-width="1.42"/><path d="M514.3 709.0Q511.9 722.0 509.4 735.0" stroke="#ffff00" stroke-opacity="1.00" stroke-width="2.40"/><path d="M514.3 709.0Q511.9 722.0 509.4 735.0" stroke="#fff" stroke-opacity="1.00" stroke-width="1.32"/><path d="M509.4 735.0Q506.9 748.0 504.2 761.0" stroke="#ffff00" stroke-opacity="1.00" stroke-width="2.28"/><path d="M509.4 735.0Q506.9 748.0 504.2 761.0" stroke="#fff" stroke-opacity="1.00" stroke-width="1.22"/><path d="M504.2 761.0Q501.5 774.0 498.5 787.0" stroke="#ffff00" stroke-opacity="1.00" stroke-width="2.16"/><path d="M504.2 761.0Q501.5 774.0 498.5 787.0" stroke="#fff" stroke-opacity="1.00" stroke-width="1.13"/><path d="M498.5 787.0Q495.6 800.0 492.5 813.0" stroke="#ffff00" stroke-opacity="1.00" stroke-width="2.04"/><path d="M498.5 787.0Q495.6 800.0 492.5 813.0" stroke="#fff" stroke-opacity="1.00" stroke-width="1.03"/><path d="M535.2 111.0Q537.4 124.0 539.4 137.0" stroke="#ffff00" stroke-opacity="1.00" stroke-width="2.84"/><path d="M535.2 111.0Q537.4 124.0 539.4 137.0" stroke="#fff" stroke-opacity="1.00" stroke-width="1.83"/><path d="M539.4 137.0Q541.3 150.0 543.1 163.0" stroke="#ffff00" stroke-opacity="1.00" stroke-width="2.93"/><path d="M539.4 137.0Q541.3 150.0 543.1 163.0" stroke="#fff" stroke-opacity="1.00" stroke-width="1.92"/><path d="M543.1 163.0Q544.9 176.0 546.5 189.0" stroke="#ffff00" stroke-opacity="1.00" stroke-width="3.02"/><path d="M543.1 163.0Q544.9 176.0 546.5 189.0" stroke="#fff" stroke-opacity="1.00" stroke-width="2.00"/><path d="M546.5 189.0Q548.0 202.0 549.4 215.0" stroke="#ffff00" stroke-opacity="1.00" stroke-width="3.11"/><path d="M546.5 189.0Q548.0 202.0 549.4 215.0" stroke="#fff" stroke-opacity="1.00" stroke-width="2.08"/><path d="M549.4 215.0Q550.8 228.0 552.0 241.0" stroke="#ffff00" stroke-opacity="1.00" stroke-width="3.20"/><path d="M549.4 215.0Q550.8 228.0 552.0 241.0" stroke="#fff" stroke-opacity="1.00" stroke-width="2.16"/><path d="M552.0 241.0Q553.2 254.0 554.2 267.0" stroke="#ffff00" stroke-opacity="1.00" stroke-width="3.29"/><path d="M552.0 241.0Q553.2 254.0 554.2 267.0" stroke="#fff" stroke-opacity="1.00" stroke-width="2.24"/><path d="M554.2 267.0Q555.2 280.0 556.1 293.0" stroke="#ffff00" stroke-opacity="1.00" stroke-width="3.38"/><path d="M554.2 267.0Q555.2 280.0 556.1 293.0" stroke="#fff" stroke-opacity="1.00" stroke-width="2.32"/><path d="M556.1 293.0Q556.9 306.0 557.5 319.0" stroke="#ffff00" stroke-opacity="1.00" stroke-width="3.47"/><path d="M556.1 293.0Q556.9 306.0 557.5 319.0" stroke="#fff" stroke-opacity="1.00" stroke-width="2.41"/><path d="M557.5 319.0Q558.1 332.0 558.6 345.0" stroke="#ffff00" stroke-opacity="1.00" stroke-width="3.56"/><path d="M557.5 319.0Q558.1 332.0 558.6 345.0" stroke="#fff" stroke-opacity="1.00" stroke-width="2.49"/><path d="M558.6 345.0Q559.0 358.0 559.2 371.0" stroke="#ffff00" stroke-opacity="1.00" stroke-width="3.65"/><path d="M558.6 345.0Q559.0 358.0 559.2 371.0" stroke="#fff" stroke-opacity="1.00" stroke-width="2.57"/><path d="M559.2 371.0Q559.5 384.0 559.5 397.0" stroke="#ffff00" stroke-opacity="1.00" stroke-width="3.74"/><path d="M559.2 371.0Q559.5 384.0 559.5 397.0" stroke="#fff" stroke-opacity="1.00" stroke-width="2.65"/><path d="M559.5 397.0Q559.6 410.0 559.4 423.0" stroke="#ffff00" stroke-opacity="1.00" stroke-width="3.76"/><path d="M559.5 397.0Q559.6 410.0 559.4 423.0" stroke="#fff" stroke-opacity="1.00" stroke-width="2.65"/><path d="M559.4 423.0Q559.3 436.0 559.0 449.0" stroke="#ffff00" stroke-opacity="1.00" stroke-width="3.66"/><path d="M559.4 423.0Q559.3 436.0 559.0 449.0" stroke="#fff" stroke-opacity="1.00" stroke-width="2.54"/><path d="M559.0 449.0Q558.6 462.0 558.1 475.0" stroke="#ffff00" stroke-opacity="1.00" stroke-width="3.55"/><path d="M559.0 449.0Q558.6 462.0 558.1 475.0" stroke="#fff" stroke-opacity="1.00" stroke-width="2.42"/><path d="M558.1 475.0Q557.6 488.0 556.9 501.0" stroke="#ffff00" stroke-opacity="1.00" stroke-width="3.45"/><path d="M558.1 475.0Q557.6 488.0 556.9 501.0" stroke="#fff" stroke-opacity="1.00" stroke-width="2.30"/><path d="M556.9 501.0Q556.1 514.0 555.2 527.0" stroke="#ffff00" stroke-opacity="1.00" stroke-width="3.34"/><path d="M556.9 501.0Q556.1 514.0 555.2 527.0" stroke="#fff" stroke-opacity="1.00" stroke-width="2.18"/><path d="M555.2 527.0Q554.3 540.0 553.2 553.0" stroke="#ffff00" stroke-opacity="1.00" stroke-width="3.24"/><path d="M555.2 527.0Q554.3 540.0 553.2 553.0" stroke="#fff" stroke-opacity="1.00" stroke-width="2.06"/><path d="M553.2 553.0Q552.1 566.0 550.8 579.0" stroke="#ffff00" stroke-opacity="1.00" stroke-width="3.14"/><path d="M553.2 553.0Q552.1 566.0 550.8 579.0" stroke="#fff" stroke-opacity="1.00" stroke-width="1.94"/><path d="M550.8 579.0Q549.5 592.0 548.1 605.0" stroke="#ffff00" stroke-opacity="1.00" stroke-width="3.02"/><path d="M550.8 579.0Q549.5 592.0 548.1 605.0" stroke="#fff" stroke-opacity="1.00" stroke-width="1.83"/><path d="M548.1 605.0Q546.6 618.0 544.9 631.0" stroke="#ffff00" stroke-opacity="1.00" stroke-width="2.89"/><path d="M548.1 605.0Q546.6 618.0 544.9 631.0" stroke="#fff" stroke-opacity="1.00" stroke-width="1.73"/><path d="M544.9 631.0Q543.2 644.0 541.3 657.0" stroke="#ffff00" stroke-opacity="1.00" stroke-width="2.77"/><path d="M544.9 631.0Q543.2 644.0 541.3 657.0" stroke="#fff" stroke-opacity="1.00" stroke-width="1.62"/><path d="M541.3 657.0Q539.5 670.0 537.4 683.0" stroke="#ffff00" stroke-opacity="1.00" stroke-width="2.64"/><path d="M541.3 657.0Q539.5 670.0 537.4 683.0" stroke="#fff" stroke-opacity="1.00" stroke-width="1.52"/><path d="M537.4 683.0Q535.4 696.0 533.1 709.0" stroke="#ffff00" stroke-opacity="1.00" stroke-width="2.52"/><path d="M537.4 683.0Q535.4 696.0 533.1 709.0" stroke="#fff" stroke-opacity="1.00" stroke-width="1.42"/><path d="M533.1 709.0Q530.8 722.0 528.4 735.0" stroke="#ffff00" stroke-opacity="1.00" stroke-width="2.40"/><path d="M533.1 709.0Q530.8 722.0 528.4 735.0" stroke="#fff" stroke-opacity="1.00" stroke-width="1.32"/><path d="M528.4 735.0Q526.0 748.0 523.3 761.0" stroke="#ffff00" stroke-opacity="1.00" stroke-width="2.28"/><path d="M528.4 735.0Q526.0 748.0 523.3 761.0" stroke="#fff" stroke-opacity="1.00" stroke-width="1.22"/><path d="M523.3 761.0Q520.7 774.0 517.9 787.0" stroke="#ffff00" stroke-opacity="1.00" stroke-width="2.16"/><path d="M523.3 761.0Q520.7 774.0 517.9 787.0" stroke="#fff" stroke-opacity="1.00" stroke-width="1.13"/><path d="M517.9 787.0Q515.0 800.0 512.0 813.0" stroke="#ffff00" stroke-opacity="1.00" stroke-width="2.04"/><path d="M517.9 787.0Q515.0 800.0 512.0 813.0" stroke="#fff" stroke-opacity="1.00" stroke-width="1.03"/><path d="M550.5 111.0Q552.8 124.0 554.8 137.0" stroke="#ffff00" stroke-opacity="1.00" stroke-width="2.84"/><path d="M550.5 111.0Q552.8 124.0 554.8 137.0" stroke="#fff" stroke-opacity="1.00" stroke-width="1.83"/><path d="M554.8 137.0Q556.8 150.0 558.7 163.0" stroke="#ffff00" stroke-opacity="1.00" stroke-width="2.93"/><path d="M554.8 137.0Q556.8 150.0 558.7 163.0" stroke="#fff" stroke-opacity="1.00" stroke-width="1.92"/><path d="M558.7 163.0Q560.5 176.0 562.1 189.0" stroke="#ffff00" stroke-opacity="1.00" stroke-width="3.02"/><path d="M558.7 163.0Q560.5 176.0 562.1 189.0" stroke="#fff" stroke-opacity="1.00" stroke-width="2.00"/><path d="M562.1 189.0Q563.8 202.0 565.2 215.0" stroke="#ffff00" stroke-opacity="1.00" stroke-width="3.11"/><path d="M562.1 189.0Q563.8 202.0 565.2 215.0" stroke="#fff" stroke-opacity="1.00" stroke-width="2.08"/><path d="M565.2 215.0Q566.7 228.0 568.0 241.0" stroke="#ffff00" stroke-opacity="1.00" stroke-width="3.20"/><path d="M565.2 215.0Q566.7 228.0 568.0 241.0" stroke="#fff" stroke-opacity="1.00" stroke-width="2.16"/><path d="M568.0 241.0Q569.2 254.0 570.3 267.0" stroke="#ffff00" stroke-opacity="1.00" stroke-width="3.29"/><path d="M568.0 241.0Q569.2 254.0 570.3 267.0" stroke="#fff" stroke-opacity="1.00" stroke-width="2.24"/><path d="M570.3 267.0Q571.3 280.0 572.2 293.0" stroke="#ffff00" stroke-opacity="1.00" stroke-width="3.38"/><path d="M570.3 267.0Q571.3 280.0 572.2 293.0" stroke="#fff" stroke-opacity="1.00" stroke-width="2.32"/><path d="M572.2 293.0Q573.1 306.0 573.8 319.0" stroke="#ffff00" stroke-opacity="1.00" stroke-width="3.47"/><path d="M572.2 293.0Q573.1 306.0 573.8 319.0" stroke="#fff" stroke-opacity="1.00" stroke-width="2.41"/><path d="M573.8 319.0Q574.5 332.0 574.9 345.0" stroke="#ffff00" stroke-opacity="1.00" stroke-width="3.56"/><path d="M573.8 319.0Q574.5 332.0 574.9 345.0" stroke="#fff" stroke-opacity="1.00" stroke-width="2.49"/><path d="M574.9 345.0Q575.4 358.0 575.7 371.0" stroke="#ffff00" stroke-opacity="1.00" stroke-width="3.65"/><path d="M574.9 345.0Q575.4 358.0 575.7 371.0" stroke="#fff" stroke-opacity="1.00" stroke-width="2.57"/><path d="M575.7 371.0Q576.0 384.0 576.1 397.0" stroke="#ffff00" stroke-opacity="1.00" stroke-width="3.74"/><path d="M575.7 371.0Q576.0 384.0 576.1 397.0" stroke="#fff" stroke-opacity="1.00" stroke-width="2.65"/><path d="M576.1 397.0Q576.2 410.0 576.1 423.0" stroke="#ffff00" stroke-opacity="1.00" stroke-width="3.76"/><path d="M576.1 397.0Q576.2 410.0 576.1 423.0" stroke="#fff" stroke-opacity="1.00" stroke-width="2.65"/><path d="M576.1 423.0Q576.0 436.0 575.8 449.0" stroke="#ffff00" stroke-opacity="1.00" stroke-width="3.66"/><path d="M576.1 423.0Q576.0 436.0 575.8 449.0" stroke="#fff" stroke-opacity="1.00" stroke-width="2.54"/><path d="M575.8 449.0Q575.5 462.0 575.0 475.0" stroke="#ffff00" stroke-opacity="1.00" stroke-width="3.55"/><path d="M575.8 449.0Q575.5 462.0 575.0 475.0" stroke="#fff" stroke-opacity="1.00" stroke-width="2.42"/><path d="M575.0 475.0Q574.5 488.0 573.9 501.0" stroke="#ffff00" stroke-opacity="1.00" stroke-width="3.45"/><path d="M575.0 475.0Q574.5 488.0 573.9 501.0" stroke="#fff" stroke-opacity="1.00" stroke-width="2.30"/><path d="M573.9 501.0Q573.2 514.0 572.3 527.0" stroke="#ffff00" stroke-opacity="1.00" stroke-width="3.34"/><path d="M573.9 501.0Q573.2 514.0 572.3 527.0" stroke="#fff" stroke-opacity="1.00" stroke-width="2.18"/><path d="M572.3 527.0Q571.5 540.0 570.4 553.0" stroke="#ffff00" stroke-opacity="1.00" stroke-width="3.24"/><path d="M572.3 527.0Q571.5 540.0 570.4 553.0" stroke="#fff" stroke-opacity="1.00" stroke-width="2.06"/><path d="M570.4 553.0Q569.4 566.0 568.1 579.0" stroke="#ffff00" stroke-opacity="1.00" stroke-width="3.14"/><path d="M570.4 553.0Q569.4 566.0 568.1 579.0" stroke="#fff" stroke-opacity="1.00" stroke-width="1.94"/><path d="M568.1 579.0Q566.9 592.0 565.4 605.0" stroke="#ffff00" stroke-opacity="1.00" stroke-width="3.02"/><path d="M568.1 579.0Q566.9 592.0 565.4 605.0" stroke="#fff" stroke-opacity="1.00" stroke-width="1.83"/><path d="M565.4 605.0Q564.0 618.0 562.3 631.0" stroke="#ffff00" stroke-opacity="1.00" stroke-width="2.89"/><path d="M565.4 605.0Q564.0 618.0 562.3 631.0" stroke="#fff" stroke-opacity="1.00" stroke-width="1.73"/><path d="M562.3 631.0Q560.7 644.0 558.9 657.0" stroke="#ffff00" stroke-opacity="1.00" stroke-width="2.77"/><path d="M562.3 631.0Q560.7 644.0 558.9 657.0" stroke="#fff" stroke-opacity="1.00" stroke-width="1.62"/><path d="M558.9 657.0Q557.1 670.0 555.0 683.0" stroke="#ffff00" stroke-opacity="1.00" stroke-width="2.64"/><path d="M558.9 657.0Q557.1 670.0 555.0 683.0" stroke="#fff" stroke-opacity="1.00" stroke-width="1.52"/><path d="M555.0 683.0Q553.0 696.0 550.8 709.0" stroke="#ffff00" stroke-opacity="1.00" stroke-width="2.52"/><path d="M555.0 683.0Q553.0 696.0 550.8 709.0" stroke="#fff" stroke-opacity="1.00" stroke-width="1.42"/><path d="M550.8 709.0Q548.6 722.0 546.2 735.0" stroke="#ffff00" stroke-opacity="1.00" stroke-width="2.40"/><path d="M550.8 709.0Q548.6 722.0 546.2 735.0" stroke="#fff" stroke-opacity="1.00" stroke-width="1.32"/><path d="M546.2 735.0Q543.8 748.0 541.2 761.0" stroke="#ffff00" stroke-opacity="1.00" stroke-width="2.28"/><path d="M546.2 735.0Q543.8 748.0 541.2 761.0" stroke="#fff" stroke-opacity="1.00" stroke-width="1.22"/><path d="M541.2 761.0Q538.6 774.0 535.8 787.0" stroke="#ffff00" stroke-opacity="1.00" stroke-width="2.16"/><path d="M541.2 761.0Q538.6 774.0 535.8 787.0" stroke="#fff" stroke-opacity="1.00" stroke-width="1.13"/><path d="M535.8 787.0Q533.0 800.0 530.0 813.0" stroke="#ffff00" stroke-opacity="1.00" stroke-width="2.04"/><path d="M535.8 787.0Q533.0 800.0 530.0 813.0" stroke="#fff" stroke-opacity="1.00" stroke-width="1.03"/><path d="M565.8 111.0Q568.0 124.0 570.0 137.0" stroke="#ffff00" stroke-opacity="1.00" stroke-width="2.84"/><path d="M565.8 111.0Q568.0 124.0 570.0 137.0" stroke="#fff" stroke-opacity="1.00" stroke-width="1.83"/><path d="M570.0 137.0Q572.0 150.0 573.9 163.0" stroke="#ffff00" stroke-opacity="1.00" stroke-width="2.93"/><path d="M570.0 137.0Q572.0 150.0 573.9 163.0" stroke="#fff" stroke-opacity="1.00" stroke-width="1.92"/><path d="M573.9 163.0Q575.7 176.0 577.4 189.0" stroke="#ffff00" stroke-opacity="1.00" stroke-width="3.02"/><path d="M573.9 163.0Q575.7 176.0 577.4 189.0" stroke="#fff" stroke-opacity="1.00" stroke-width="2.00"/><path d="M577.4 189.0Q579.0 202.0 580.5 215.0" stroke="#ffff00" stroke-opacity="1.00" stroke-width="3.11"/><path d="M577.4 189.0Q579.0 202.0 580.5 215.0" stroke="#fff" stroke-opacity="1.00" stroke-width="2.08"/><path d="M580.5 215.0Q581.9 228.0 583.2 241.0" stroke="#ffff00" stroke-opacity="1.00" stroke-width="3.20"/><path d="M580.5 215.0Q581.9 228.0 583.2 241.0" stroke="#fff" stroke-opacity="1.00" stroke-width="2.16"/><path d="M583.2 241.0Q584.5 254.0 585.6 267.0" stroke="#ffff00" stroke-opacity="1.00" stroke-width="3.29"/><path d="M583.2 241.0Q584.5 254.0 585.6 267.0" stroke="#fff" stroke-opacity="1.00" stroke-width="2.24"/><path d="M585.6 267.0Q586.6 280.0 587.5 293.0" stroke="#ffff00" stroke-opacity="1.00" stroke-width="3.38"/><path d="M585.6 267.0Q586.6 280.0 587.5 293.0" stroke="#fff" stroke-opacity="1.00" stroke-width="2.32"/><path d="M587.5 293.0Q588.4 306.0 589.1 319.0" stroke="#ffff00" stroke-opacity="1.00" stroke-width="3.47"/><path d="M587.5 293.0Q588.4 306.0 589.1 319.0" stroke="#fff" stroke-opacity="1.00" stroke-width="2.41"/><path d="M589.1 319.0Q589.8 332.0 590.4 345.0" stroke="#ffff00" stroke-opacity="1.00" stroke-width="3.56"/><path d="M589.1 319.0Q589.8 332.0 590.4 345.0" stroke="#fff" stroke-opacity="1.00" stroke-width="2.49"/><path d="M590.4 345.0Q590.9 358.0 591.2 371.0" stroke="#ffff00" stroke-opacity="1.00" stroke-width="3.65"/><path d="M590.4 345.0Q590.9 358.0 591.2 371.0" stroke="#fff" stroke-opacity="1.00" stroke-width="2.57"/><path d="M591.2 371.0Q591.5 384.0 591.7 397.0" stroke="#ffff00" stroke-opacity="1.00" stroke-width="3.74"/><path d="M591.2 371.0Q591.5 384.0 591.7 397.0" stroke="#fff" stroke-opacity="1.00" stroke-width="2.65"/><path d="M591.7 397.0Q591.8 410.0 591.8 423.0" stroke="#ffff00" stroke-opacity="1.00" stroke-width="3.76"/><path d="M591.7 397.0Q591.8 410.0 591.8 423.0" stroke="#fff" stroke-opacity="1.00" stroke-width="2.65"/><path d="M591.8 423.0Q591.7 436.0 591.5 449.0" stroke="#ffff00" stroke-opacity="1.00" stroke-width="3.66"/><path d="M591.8 423.0Q591.7 436.0 591.5 449.0" stroke="#fff" stroke-opacity="1.00" stroke-width="2.54"/><path d="M591.5 449.0Q591.2 462.0 590.8 475.0" stroke="#ffff00" stroke-opacity="1.00" stroke-width="3.55"/><path d="M591.5 449.0Q591.2 462.0 590.8 475.0" stroke="#fff" stroke-opacity="1.00" stroke-width="2.42"/><path d="M590.8 475.0Q590.4 488.0 589.8 501.0" stroke="#ffff00" stroke-opacity="1.00" stroke-width="3.45"/><path d="M590.8 475.0Q590.4 488.0 589.8 501.0" stroke="#fff" stroke-opacity="1.00" stroke-width="2.30"/><path d="M589.8 501.0Q589.1 514.0 588.3 527.0" stroke="#ffff00" stroke-opacity="1.00" stroke-width="3.34"/><path d="M589.8 501.0Q589.1 514.0 588.3 527.0" stroke="#fff" stroke-opacity="1.00" stroke-width="2.18"/><path d="M588.3 527.0Q587.5 540.0 586.5 553.0" stroke="#ffff00" stroke-opacity="1.00" stroke-width="3.24"/><path d="M588.3 527.0Q587.5 540.0 586.5 553.0" stroke="#fff" stroke-opacity="1.00" stroke-width="2.06"/><path d="M586.5 553.0Q585.6 566.0 584.4 579.0" stroke="#ffff00" stroke-opacity="1.00" stroke-width="3.14"/><path d="M586.5 553.0Q585.6 566.0 584.4 579.0" stroke="#fff" stroke-opacity="1.00" stroke-width="1.94"/><path d="M584.4 579.0Q583.2 592.0 581.8 605.0" stroke="#ffff00" stroke-opacity="1.00" stroke-width="3.02"/><path d="M584.4 579.0Q583.2 592.0 581.8 605.0" stroke="#fff" stroke-opacity="1.00" stroke-width="1.83"/><path d="M581.8 605.0Q580.5 618.0 578.9 631.0" stroke="#ffff00" stroke-opacity="1.00" stroke-width="2.89"/><path d="M581.8 605.0Q580.5 618.0 578.9 631.0" stroke="#fff" stroke-opacity="1.00" stroke-width="1.73"/><path d="M578.9 631.0Q577.3 644.0 575.6 657.0" stroke="#ffff00" stroke-opacity="1.00" stroke-width="2.77"/><path d="M578.9 631.0Q577.3 644.0 575.6 657.0" stroke="#fff" stroke-opacity="1.00" stroke-width="1.62"/><path d="M575.6 657.0Q573.8 670.0 571.9 683.0" stroke="#ffff00" stroke-opacity="1.00" stroke-width="2.64"/><path d="M575.6 657.0Q573.8 670.0 571.9 683.0" stroke="#fff" stroke-opacity="1.00" stroke-width="1.52"/><path d="M571.9 683.0Q570.0 696.0 567.8 709.0" stroke="#ffff00" stroke-opacity="1.00" stroke-width="2.52"/><path d="M571.9 683.0Q570.0 696.0 567.8 709.0" stroke="#fff" stroke-opacity="1.00" stroke-width="1.42"/><path d="M567.8 709.0Q565.7 722.0 563.4 735.0" stroke="#ffff00" stroke-opacity="1.00" stroke-width="2.40"/><path d="M567.8 709.0Q565.7 722.0 563.4 735.0" stroke="#fff" stroke-opacity="1.00" stroke-width="1.32"/><path d="M563.4 735.0Q561.1 748.0 558.6 761.0" stroke="#ffff00" stroke-opacity="1.00" stroke-width="2.28"/><path d="M563.4 735.0Q561.1 748.0 558.6 761.0" stroke="#fff" stroke-opacity="1.00" stroke-width="1.22"/><path d="M558.6 761.0Q556.1 774.0 553.4 787.0" stroke="#ffff00" stroke-opacity="1.00" stroke-width="2.16"/><path d="M558.6 761.0Q556.1 774.0 553.4 787.0" stroke="#fff" stroke-opacity="1.00" stroke-width="1.13"/><path d="M553.4 787.0Q550.7 800.0 547.8 813.0" stroke="#ffff00" stroke-opacity="1.00" stroke-width="2.04"/><path d="M553.4 787.0Q550.7 800.0 547.8 813.0" stroke="#fff" stroke-opacity="1.00" stroke-width="1.03"/><path d="M580.4 111.0Q582.6 124.0 584.7 137.0" stroke="#ffff00" stroke-opacity="1.00" stroke-width="2.84"/><path d="M580.4 111.0Q582.6 124.0 584.7 137.0" stroke="#fff" stroke-opacity="1.00" stroke-width="1.83"/><path d="M584.7 137.0Q586.7 150.0 588.5 163.0" stroke="#ffff00" stroke-opacity="1.00" stroke-width="2.93"/><path d="M584.7 137.0Q586.7 150.0 588.5 163.0" stroke="#fff" stroke-opacity="1.00" stroke-width="1.92"/><path d="M588.5 163.0Q590.4 176.0 592.0 189.0" stroke="#ffff00" stroke-opacity="1.00" stroke-width="3.02"/><path d="M588.5 163.0Q590.4 176.0 592.0 189.0" stroke="#fff" stroke-opacity="1.00" stroke-width="2.00"/><path d="M592.0 189.0Q593.7 202.0 595.1 215.0" stroke="#ffff00" stroke-opacity="1.00" stroke-width="3.11"/><path d="M592.0 189.0Q593.7 202.0 595.1 215.0" stroke="#fff" stroke-opacity="1.00" stroke-width="2.08"/><path d="M595.1 215.0Q596.6 228.0 597.9 241.0" stroke="#ffff00" stroke-opacity="1.00" stroke-width="3.20"/><path d="M595.1 215.0Q596.6 228.0 597.9 241.0" stroke="#fff" stroke-opacity="1.00" stroke-width="2.16"/><path d="M597.9 241.0Q599.2 254.0 600.3 267.0" stroke="#ffff00" stroke-opacity="1.00" stroke-width="3.29"/><path d="M597.9 241.0Q599.2 254.0 600.3 267.0" stroke="#fff" stroke-opacity="1.00" stroke-width="2.24"/><path d="M600.3 267.0Q601.4 280.0 602.3 293.0" stroke="#ffff00" stroke-opacity="1.00" stroke-width="3.38"/><path d="M600.3 267.0Q601.4 280.0 602.3 293.0" stroke="#fff" stroke-opacity="1.00" stroke-width="2.32"/><path d="M602.3 293.0Q603.2 306.0 603.9 319.0" stroke="#ffff00" stroke-opacity="1.00" stroke-width="3.47"/><path d="M602.3 293.0Q603.2 306.0 603.9 319.0" stroke="#fff" stroke-opacity="1.00" stroke-width="2.41"/><path d="M603.9 319.0Q604.6 332.0 605.2 345.0" stroke="#ffff00" stroke-opacity="1.00" stroke-width="3.56"/><path d="M603.9 319.0Q604.6 332.0 605.2 345.0" stroke="#fff" stroke-opacity="1.00" stroke-width="2.49"/><path d="M605.2 345.0Q605.7 358.0 606.0 371.0" stroke="#ffff00" stroke-opacity="1.00" stroke-width="3.65"/><path d="M605.2 345.0Q605.7 358.0 606.0 371.0" stroke="#fff" stroke-opacity="1.00" stroke-width="2.57"/><path d="M606.0 371.0Q606.4 384.0 606.6 397.0" stroke="#ffff00" stroke-opacity="1.00" stroke-width="3.74"/><path d="M606.0 371.0Q606.4 384.0 606.6 397.0" stroke="#fff" stroke-opacity="1.00" stroke-width="2.65"/><path d="M606.6 397.0Q606.7 410.0 606.7 423.0" stroke="#ffff00" stroke-opacity="1.00" stroke-width="3.76"/><path d="M606.6 397.0Q606.7 410.0 606.7 423.0" stroke="#fff" stroke-opacity="1.00" stroke-width="2.65"/><path d="M606.7 423.0Q606.7 436.0 606.5 449.0" stroke="#ffff00" stroke-opacity="1.00" stroke-width="3.66"/><path d="M606.7 423.0Q606.7 436.0 606.5 449.0" stroke="#fff" stroke-opacity="1.00" stroke-width="2.54"/><path d="M606.5 449.0Q606.3 462.0 605.9 475.0" stroke="#ffff00" stroke-opacity="1.00" stroke-width="3.55"/><path d="M606.5 449.0Q606.3 462.0 605.9 475.0" stroke="#fff" stroke-opacity="1.00" stroke-width="2.42"/><path d="M605.9 475.0Q605.5 488.0 604.9 501.0" stroke="#ffff00" stroke-opacity="1.00" stroke-width="3.45"/><path d="M605.9 475.0Q605.5 488.0 604.9 501.0" stroke="#fff" stroke-opacity="1.00" stroke-width="2.30"/><path d="M604.9 501.0Q604.3 514.0 603.6 527.0" stroke="#ffff00" stroke-opacity="1.00" stroke-width="3.34"/><path d="M604.9 501.0Q604.3 514.0 603.6 527.0" stroke="#fff" stroke-opacity="1.00" stroke-width="2.18"/><path d="M603.6 527.0Q602.8 540.0 601.8 553.0" stroke="#ffff00" stroke-opacity="1.00" stroke-width="3.24"/><path d="M603.6 527.0Q602.8 540.0 601.8 553.0" stroke="#fff" stroke-opacity="1.00" stroke-width="2.06"/><path d="M601.8 553.0Q600.9 566.0 599.7 579.0" stroke="#ffff00" stroke-opacity="1.00" stroke-width="3.14"/><path d="M601.8 553.0Q600.9 566.0 599.7 579.0" stroke="#fff" stroke-opacity="1.00" stroke-width="1.94"/><path d="M599.7 579.0Q598.6 592.0 597.3 605.0" stroke="#ffff00" stroke-opacity="1.00" stroke-width="3.02"/><path d="M599.7 579.0Q598.6 592.0 597.3 605.0" stroke="#fff" stroke-opacity="1.00" stroke-width="1.83"/><path d="M597.3 605.0Q596.0 618.0 594.4 631.0" stroke="#ffff00" stroke-opacity="1.00" stroke-width="2.89"/><path d="M597.3 605.0Q596.0 618.0 594.4 631.0" stroke="#fff" stroke-opacity="1.00" stroke-width="1.73"/><path d="M594.4 631.0Q592.9 644.0 591.2 657.0" stroke="#ffff00" stroke-opacity="1.00" stroke-width="2.77"/><path d="M594.4 631.0Q592.9 644.0 591.2 657.0" stroke="#fff" stroke-opacity="1.00" stroke-width="1.62"/><path d="M591.2 657.0Q589.5 670.0 587.7 683.0" stroke="#ffff00" stroke-opacity="1.00" stroke-width="2.64"/><path d="M591.2 657.0Q589.5 670.0 587.7 683.0" stroke="#fff" stroke-opacity="1.00" stroke-width="1.52"/><path d="M587.7 683.0Q585.8 696.0 583.7 709.0" stroke="#ffff00" stroke-opacity="1.00" stroke-width="2.52"/><path d="M587.7 683.0Q585.8 696.0 583.7 709.0" stroke="#fff" stroke-opacity="1.00" stroke-width="1.42"/><path d="M583.7 709.0Q581.6 722.0 579.4 735.0" stroke="#ffff00" stroke-opacity="1.00" stroke-width="2.40"/><path d="M583.7 709.0Q581.6 722.0 579.4 735.0" stroke="#fff" stroke-opacity="1.00" stroke-width="1.32"/><path d="M579.4 735.0Q577.1 748.0 574.7 761.0" stroke="#ffff00" stroke-opacity="1.00" stroke-width="2.28"/><path d="M579.4 735.0Q577.1 748.0 574.7 761.0" stroke="#fff" stroke-opacity="1.00" stroke-width="1.22"/><path d="M574.7 761.0Q572.2 774.0 569.6 787.0" stroke="#ffff00" stroke-opacity="1.00" stroke-width="2.16"/><path d="M574.7 761.0Q572.2 774.0 569.6 787.0" stroke="#fff" stroke-opacity="1.00" stroke-width="1.13"/><path d="M569.6 787.0Q567.0 800.0 564.2 813.0" stroke="#ffff00" stroke-opacity="1.00" stroke-width="2.04"/><path d="M569.6 787.0Q567.0 800.0 564.2 813.0" stroke="#fff" stroke-opacity="1.00" stroke-width="1.03"/><path d="M594.2 111.0Q596.4 124.0 598.5 137.0" stroke="#ffff00" stroke-opacity="1.00" stroke-width="2.84"/><path d="M594.2 111.0Q596.4 124.0 598.5 137.0" stroke="#fff" stroke-opacity="1.00" stroke-width="1.83"/><path d="M598.5 137.0Q600.6 150.0 602.4 163.0" stroke="#ffff00" stroke-opacity="1.00" stroke-width="2.93"/><path d="M598.5 137.0Q600.6 150.0 602.4 163.0" stroke="#fff" stroke-opacity="1.00" stroke-width="1.92"/><path d="M602.4 163.0Q604.3 176.0 606.0 189.0" stroke="#ffff00" stroke-opacity="1.00" stroke-width="3.02"/><path d="M602.4 163.0Q604.3 176.0 606.0 189.0" stroke="#fff" stroke-opacity="1.00" stroke-width="2.00"/><path d="M606.0 189.0Q607.7 202.0 609.2 215.0" stroke="#ffff00" stroke-opacity="1.00" stroke-width="3.11"/><path d="M606.0 189.0Q607.7 202.0 609.2 215.0" stroke="#fff" stroke-opacity="1.00" stroke-width="2.08"/><path d="M609.2 215.0Q610.7 228.0 612.0 241.0" stroke="#ffff00" stroke-opacity="1.00" stroke-width="3.20"/><path d="M609.2 215.0Q610.7 228.0 612.0 241.0" stroke="#fff" stroke-opacity="1.00" stroke-width="2.16"/><path d="M612.0 241.0Q613.3 254.0 614.5 267.0" stroke="#ffff00" stroke-opacity="1.00" stroke-width="3.29"/><path d="M612.0 241.0Q613.3 254.0 614.5 267.0" stroke="#fff" stroke-opacity="1.00" stroke-width="2.24"/><path d="M614.5 267.0Q615.6 280.0 616.6 293.0" stroke="#ffff00" stroke-opacity="1.00" stroke-width="3.38"/><path d="M614.5 267.0Q615.6 280.0 616.6 293.0" stroke="#fff" stroke-opacity="1.00" stroke-width="2.32"/><path d="M616.6 293.0Q617.5 306.0 618.3 319.0" stroke="#ffff00" stroke-opacity="1.00" stroke-width="3.47"/><path d="M616.6 293.0Q617.5 306.0 618.3 319.0" stroke="#fff" stroke-opacity="1.00" stroke-width="2.41"/><path d="M618.3 319.0Q619.0 332.0 619.6 345.0" stroke="#ffff00" stroke-opacity="1.00" stroke-width="3.56"/><path d="M618.3 319.0Q619.0 332.0 619.6 345.0" stroke="#fff" stroke-opacity="1.00" stroke-width="2.49"/><path d="M619.6 345.0Q620.2 358.0 620.6 371.0" stroke="#ffff00" stroke-opacity="1.00" stroke-width="3.65"/><path d="M619.6 345.0Q620.2 358.0 620.6 371.0" stroke="#fff" stroke-opacity="1.00" stroke-width="2.57"/><path d="M620.6 371.0Q621.0 384.0 621.2 397.0" stroke="#ffff00" stroke-opacity="1.00" stroke-width="3.74"/><path d="M620.6 371.0Q621.0 384.0 621.2 397.0" stroke="#fff" stroke-opacity="1.00" stroke-width="2.65"/><path d="M621.2 397.0Q621.4 410.0 621.4 423.0" stroke="#ffff00" stroke-opacity="1.00" stroke-width="3.76"/><path d="M621.2 397.0Q621.4 410.0 621.4 423.0" stroke="#fff" stroke-opacity="1.00" stroke-width="2.65"/><path d="M621.4 423.0Q621.4 436.0 621.3 449.0" stroke="#ffff00" stroke-opacity="1.00" stroke-width="3.66"/><path d="M621.4 423.0Q621.4 436.0 621.3 449.0" stroke="#fff" stroke-opacity="1.00" stroke-width="2.54"/><path d="M621.3 449.0Q621.1 462.0 620.8 475.0" stroke="#ffff00" stroke-opacity="1.00" stroke-width="3.55"/><path d="M621.3 449.0Q621.1 462.0 620.8 475.0" stroke="#fff" stroke-opacity="1.00" stroke-width="2.42"/><path d="M620.8 475.0Q620.4 488.0 619.9 501.0" stroke="#ffff00" stroke-opacity="1.00" stroke-width="3.45"/><path d="M620.8 475.0Q620.4 488.0 619.9 501.0" stroke="#fff" stroke-opacity="1.00" stroke-width="2.30"/><path d="M619.9 501.0Q619.3 514.0 618.6 527.0" stroke="#ffff00" stroke-opacity="1.00" stroke-width="3.34"/><path d="M619.9 501.0Q619.3 514.0 618.6 527.0" stroke="#fff" stroke-opacity="1.00" stroke-width="2.18"/><path d="M618.6 527.0Q617.9 540.0 617.0 553.0" stroke="#ffff00" stroke-opacity="1.00" stroke-width="3.24"/><path d="M618.6 527.0Q617.9 540.0 617.0 553.0" stroke="#fff" stroke-opacity="1.00" stroke-width="2.06"/><path d="M617.0 553.0Q616.1 566.0 615.0 579.0" stroke="#ffff00" stroke-opacity="1.00" stroke-width="3.14"/><path d="M617.0 553.0Q616.1 566.0 615.0 579.0" stroke="#fff" stroke-opacity="1.00" stroke-width="1.94"/><path d="M615.0 579.0Q613.9 592.0 612.6 605.0" stroke="#ffff00" stroke-opacity="1.00" stroke-width="3.02"/><path d="M615.0 579.0Q613.9 592.0 612.6 605.0" stroke="#fff" stroke-opacity="1.00" stroke-width="1.83"/><path d="M612.6 605.0Q611.4 618.0 609.9 631.0" stroke="#ffff00" stroke-opacity="1.00" stroke-width="2.89"/><path d="M612.6 605.0Q611.4 618.0 609.9 631.0" stroke="#fff" stroke-opacity="1.00" stroke-width="1.73"/><path d="M609.9 631.0Q608.4 644.0 606.8 657.0" stroke="#ffff00" stroke-opacity="1.00" stroke-width="2.77"/><path d="M609.9 631.0Q608.4 644.0 606.8 657.0" stroke="#fff" stroke-opacity="1.00" stroke-width="1.62"/><path d="M606.8 657.0Q605.1 670.0 603.3 683.0" stroke="#ffff00" stroke-opacity="1.00" stroke-width="2.64"/><path d="M606.8 657.0Q605.1 670.0 603.3 683.0" stroke="#fff" stroke-opacity="1.00" stroke-width="1.52"/><path d="M603.3 683.0Q601.5 696.0 599.5 709.0" stroke="#ffff00" stroke-opacity="1.00" stroke-width="2.52"/><path d="M603.3 683.0Q601.5 696.0 599.5 709.0" stroke="#fff" stroke-opacity="1.00" stroke-width="1.42"/><path d="M599.5 709.0Q597.4 722.0 595.2 735.0" stroke="#ffff00" stroke-opacity="1.00" stroke-width="2.40"/><path d="M599.5 709.0Q597.4 722.0 595.2 735.0" stroke="#fff" stroke-opacity="1.00" stroke-width="1.32"/><path d="M595.2 735.0Q593.0 748.0 590.6 761.0" stroke="#ffff00" stroke-opacity="1.00" stroke-width="2.28"/><path d="M595.2 735.0Q593.0 748.0 590.6 761.0" stroke="#fff" stroke-opacity="1.00" stroke-width="1.22"/><path d="M590.6 761.0Q588.3 774.0 585.7 787.0" stroke="#ffff00" stroke-opacity="1.00" stroke-width="2.16"/><path d="M590.6 761.0Q588.3 774.0 585.7 787.0" stroke="#fff" stroke-opacity="1.00" stroke-width="1.13"/><path d="M585.7 787.0Q583.1 800.0 580.4 813.0" stroke="#ffff00" stroke-opacity="1.00" stroke-width="2.04"/><path d="M585.7 787.0Q583.1 800.0 580.4 813.0" stroke="#fff" stroke-opacity="1.00" stroke-width="1.03"/><path d="M622.1 215.0Q623.7 228.0 625.2 241.0" stroke="#ffff00" stroke-opacity="0.11" stroke-width="1.76"/><path d="M622.1 215.0Q623.7 228.0 625.2 241.0" stroke="#fff" stroke-opacity="0.11" stroke-width="1.19"/><path d="M625.2 241.0Q626.6 254.0 627.8 267.0" stroke="#ffff00" stroke-opacity="0.21" stroke-width="1.81"/><path d="M625.2 241.0Q626.6 254.0 627.8 267.0" stroke="#fff" stroke-opacity="0.21" stroke-width="1.23"/><path d="M627.8 267.0Q629.0 280.0 630.0 293.0" stroke="#ffff00" stroke-opacity="0.31" stroke-width="1.86"/><path d="M627.8 267.0Q629.0 280.0 630.0 293.0" stroke="#fff" stroke-opacity="0.31" stroke-width="1.28"/><path d="M630.0 293.0Q631.1 306.0 631.9 319.0" stroke="#ffff00" stroke-opacity="0.41" stroke-width="1.91"/><path d="M630.0 293.0Q631.1 306.0 631.9 319.0" stroke="#fff" stroke-opacity="0.41" stroke-width="1.32"/><path d="M631.9 319.0Q632.7 332.0 633.4 345.0" stroke="#ffff00" stroke-opacity="0.51" stroke-width="1.96"/><path d="M631.9 319.0Q632.7 332.0 633.4 345.0" stroke="#fff" stroke-opacity="0.51" stroke-width="1.37"/><path d="M633.4 345.0Q634.0 358.0 634.5 371.0" stroke="#ffff00" stroke-opacity="0.66" stroke-width="2.01"/><path d="M633.4 345.0Q634.0 358.0 634.5 371.0" stroke="#fff" stroke-opacity="0.66" stroke-width="1.41"/><path d="M634.5 371.0Q634.9 384.0 635.2 397.0" stroke="#ffff00" stroke-opacity="0.80" stroke-width="2.81"/><path d="M634.5 371.0Q634.9 384.0 635.2 397.0" stroke="#fff" stroke-opacity="0.80" stroke-width="1.99"/><path d="M635.2 397.0Q635.5 410.0 635.6 423.0" stroke="#ffff00" stroke-opacity="0.94" stroke-width="2.82"/><path d="M635.2 397.0Q635.5 410.0 635.6 423.0" stroke="#fff" stroke-opacity="0.94" stroke-width="1.99"/><path d="M635.6 423.0Q635.6 436.0 635.5 449.0" stroke="#ffff00" stroke-opacity="1.00" stroke-width="2.74"/><path d="M635.6 423.0Q635.6 436.0 635.5 449.0" stroke="#fff" stroke-opacity="1.00" stroke-width="1.90"/><path d="M635.5 449.0Q635.4 462.0 635.1 475.0" stroke="#ffff00" stroke-opacity="1.00" stroke-width="2.66"/><path d="M635.5 449.0Q635.4 462.0 635.1 475.0" stroke="#fff" stroke-opacity="1.00" stroke-width="1.81"/><path d="M635.1 475.0Q634.8 488.0 634.3 501.0" stroke="#ffff00" stroke-opacity="1.00" stroke-width="2.59"/><path d="M635.1 475.0Q634.8 488.0 634.3 501.0" stroke="#fff" stroke-opacity="1.00" stroke-width="1.72"/><path d="M634.3 501.0Q633.8 514.0 633.1 527.0" stroke="#ffff00" stroke-opacity="1.00" stroke-width="2.51"/><path d="M634.3 501.0Q633.8 514.0 633.1 527.0" stroke="#fff" stroke-opacity="1.00" stroke-width="1.63"/><path d="M633.1 527.0Q632.5 540.0 631.6 553.0" stroke="#ffff00" stroke-opacity="1.00" stroke-width="2.43"/><path d="M633.1 527.0Q632.5 540.0 631.6 553.0" stroke="#fff" stroke-opacity="1.00" stroke-width="1.54"/><path d="M631.6 553.0Q630.7 566.0 629.6 579.0" stroke="#ffff00" stroke-opacity="1.00" stroke-width="2.35"/><path d="M631.6 553.0Q630.7 566.0 629.6 579.0" stroke="#fff" stroke-opacity="1.00" stroke-width="1.46"/><path d="M629.6 579.0Q628.6 592.0 627.3 605.0" stroke="#ffff00" stroke-opacity="1.00" stroke-width="2.26"/><path d="M629.6 579.0Q628.6 592.0 627.3 605.0" stroke="#fff" stroke-opacity="1.00" stroke-width="1.37"/><path d="M627.3 605.0Q626.1 618.0 624.6 631.0" stroke="#ffff00" stroke-opacity="1.00" stroke-width="2.17"/><path d="M627.3 605.0Q626.1 618.0 624.6 631.0" stroke="#fff" stroke-opacity="1.00" stroke-width="1.30"/><path d="M624.6 631.0Q623.2 644.0 621.6 657.0" stroke="#ffff00" stroke-opacity="1.00" stroke-width="2.08"/><path d="M624.6 631.0Q623.2 644.0 621.6 657.0" stroke="#fff" stroke-opacity="1.00" stroke-width="1.22"/><path d="M621.6 657.0Q619.9 670.0 618.1 683.0" stroke="#ffff00" stroke-opacity="1.00" stroke-width="1.98"/><path d="M621.6 657.0Q619.9 670.0 618.1 683.0" stroke="#fff" stroke-opacity="1.00" stroke-width="1.14"/><path d="M618.1 683.0Q616.3 696.0 614.3 709.0" stroke="#ffff00" stroke-opacity="1.00" stroke-width="1.89"/><path d="M618.1 683.0Q616.3 696.0 614.3 709.0" stroke="#fff" stroke-opacity="1.00" stroke-width="1.06"/><path d="M614.3 709.0Q612.2 722.0 610.0 735.0" stroke="#ffff00" stroke-opacity="1.00" stroke-width="1.80"/><path d="M614.3 709.0Q612.2 722.0 610.0 735.0" stroke="#fff" stroke-opacity="1.00" stroke-width="0.99"/><path d="M610.0 735.0Q607.8 748.0 605.4 761.0" stroke="#ffff00" stroke-opacity="1.00" stroke-width="1.71"/><path d="M610.0 735.0Q607.8 748.0 605.4 761.0" stroke="#fff" stroke-opacity="1.00" stroke-width="0.92"/><path d="M605.4 761.0Q603.0 774.0 600.5 787.0" stroke="#ffff00" stroke-opacity="1.00" stroke-width="1.62"/><path d="M605.4 761.0Q603.0 774.0 600.5 787.0" stroke="#fff" stroke-opacity="1.00" stroke-width="0.84"/><path d="M600.5 787.0Q597.9 800.0 595.1 813.0" stroke="#ffff00" stroke-opacity="1.00" stroke-width="1.53"/><path d="M600.5 787.0Q597.9 800.0 595.1 813.0" stroke="#fff" stroke-opacity="1.00" stroke-width="0.77"/></g><circle cx="479.5" cy="161.5" r="0.8" fill="#fff"/><circle cx="464.0" cy="260.0" r="0.8" fill="#fff"/><circle cx="432.5" cy="377.0" r="0.8" fill="#fff"/><circle cx="448.5" cy="637.5" r="0.8" fill="#fff"/><circle cx="520.5" cy="383.5" r="0.8" fill="#fff"/>
<rect x="310.0" y="113.0" width="366.0" height="695.5" fill="none" stroke="#000" stroke-width="1.60"/>
<line x1="493.4" y1="105.5" x2="493.4" y2="816" stroke="#0000ff" stroke-width="1.1"/>
<line x1="305.8" y1="461.2" x2="681" y2="461.2" stroke="#0000ff" stroke-width="1.1"/>
<line x1="303" y1="808.50" x2="310" y2="808.50" stroke="#000" stroke-width="1.60"/>
<text x="288.42" y="812.35" font-size="10.30" textLength="6.18" lengthAdjust="spacingAndGlyphs" fill="#000">0</text>
<line x1="303" y1="721.56" x2="310" y2="721.56" stroke="#000" stroke-width="1.60"/>
<text x="276.04" y="725.41" font-size="10.30" textLength="18.56" lengthAdjust="spacingAndGlyphs" fill="#000">500</text>
<line x1="303" y1="634.62" x2="310" y2="634.62" stroke="#000" stroke-width="1.60"/>
<text x="269.86" y="638.47" font-size="10.30" textLength="24.73" lengthAdjust="spacingAndGlyphs" fill="#000">1000</text>
<line x1="303" y1="547.68" x2="310" y2="547.68" stroke="#000" stroke-width="1.60"/>
<text x="269.86" y="551.53" font-size="10.30" textLength="24.73" lengthAdjust="spacingAndGlyphs" fill="#000">1500</text>
<line x1="303" y1="460.74" x2="310" y2="460.74" stroke="#000" stroke-width="1.60"/>
<text x="269.86" y="464.59" font-size="10.30" textLength="24.73" lengthAdjust="spacingAndGlyphs" fill="#000">2000</text>
<line x1="303" y1="373.80" x2="310" y2="373.80" stroke="#000" stroke-width="1.60"/>
<text x="269.86" y="377.65" font-size="10.30" textLength="24.73" lengthAdjust="spacingAndGlyphs" fill="#000">2500</text>
<line x1="303" y1="286.86" x2="310" y2="286.86" stroke="#000" stroke-width="1.60"/>
<text x="269.86" y="290.71" font-size="10.30" textLength="24.73" lengthAdjust="spacingAndGlyphs" fill="#000">3000</text>
<line x1="303" y1="199.92" x2="310" y2="199.92" stroke="#000" stroke-width="1.60"/>
<text x="269.86" y="203.77" font-size="10.30" textLength="24.73" lengthAdjust="spacingAndGlyphs" fill="#000">3500</text>
<line x1="303" y1="112.98" x2="310" y2="112.98" stroke="#000" stroke-width="1.60"/>
<text x="269.86" y="116.83" font-size="10.30" textLength="24.73" lengthAdjust="spacingAndGlyphs" fill="#000">4000</text>
<line x1="310.00" y1="808.5" x2="310.00" y2="815.5" stroke="#000" stroke-width="1.60"/>
<text x="306.91" y="832.00" font-size="10.30" textLength="6.18" lengthAdjust="spacingAndGlyphs" fill="#000">0</text>
<line x1="353.50" y1="808.5" x2="353.50" y2="815.5" stroke="#000" stroke-width="1.60"/>
<text x="344.22" y="832.00" font-size="10.30" textLength="18.56" lengthAdjust="spacingAndGlyphs" fill="#000">250</text>
<line x1="397.00" y1="808.5" x2="397.00" y2="815.5" stroke="#000" stroke-width="1.60"/>
<text x="387.72" y="832.00" font-size="10.30" textLength="18.56" lengthAdjust="spacingAndGlyphs" fill="#000">500</text>
<line x1="440.50" y1="808.5" x2="440.50" y2="815.5" stroke="#000" stroke-width="1.60"/>
<text x="431.22" y="832.00" font-size="10.30" textLength="18.56" lengthAdjust="spacingAndGlyphs" fill="#000">750</text>
<line x1="484.00" y1="808.5" x2="484.00" y2="815.5" stroke="#000" stroke-width="1.60"/>
<text x="471.63" y="832.00" font-size="10.30" textLength="24.73" lengthAdjust="spacingAndGlyphs" fill="#000">1000</text>
<line x1="527.50" y1="808.5" x2="527.50" y2="815.5" stroke="#000" stroke-width="1.60"/>
<text x="515.13" y="832.00" font-size="10.30" textLength="24.73" lengthAdjust="spacingAndGlyphs" fill="#000">1250</text>
<line x1="571.00" y1="808.5" x2="571.00" y2="815.5" stroke="#000" stroke-width="1.60"/>
<text x="558.63" y="832.00" font-size="10.30" textLength="24.73" lengthAdjust="spacingAndGlyphs" fill="#000">1500</text>
<line x1="614.50" y1="808.5" x2="614.50" y2="815.5" stroke="#000" stroke-width="1.60"/>
<text x="602.13" y="832.00" font-size="10.30" textLength="24.73" lengthAdjust="spacingAndGlyphs" fill="#000">1750</text>
<line x1="658.00" y1="808.5" x2="658.00" y2="815.5" stroke="#000" stroke-width="1.60"/>
<text x="645.63" y="832.00" font-size="10.30" textLength="24.73" lengthAdjust="spacingAndGlyphs" fill="#000">2000</text>
<text x="489.87" y="850.00" font-size="10.30" textLength="6.66" lengthAdjust="spacingAndGlyphs" fill="#000">X</text>
<g transform="translate(258.10 461.00) rotate(-90)"><text x="-2.99" y="0" font-size="10.30" textLength="5.98" lengthAdjust="spacingAndGlyphs" fill="#000">Y</text></g>
<defs><linearGradient id="hot" x1="0" y1="1" x2="0" y2="0"><stop offset="0" stop-color="rgb(10,0,0)"/><stop offset="0.365" stop-color="rgb(255,0,0)"/><stop offset="0.746" stop-color="rgb(255,255,0)"/><stop offset="1" stop-color="rgb(255,255,255)"/></linearGradient></defs>
<rect x="712.0" y="113.0" width="35.0" height="695.5" fill="url(#hot)" stroke="#000" stroke-width="1.60"/>
<line x1="747" y1="715.00" x2="754" y2="715.00" stroke="#000" stroke-width="1.60"/>
<text x="762.70" y="718.85" font-size="10.30" textLength="18.56" lengthAdjust="spacingAndGlyphs" fill="#000">600</text>
<line x1="747" y1="570.00" x2="754" y2="570.00" stroke="#000" stroke-width="1.60"/>
<text x="762.70" y="573.85" font-size="10.30" textLength="18.56" lengthAdjust="spacingAndGlyphs" fill="#000">800</text>
<line x1="747" y1="425.00" x2="754" y2="425.00" stroke="#000" stroke-width="1.60"/>
<text x="762.70" y="428.85" font-size="10.30" textLength="24.73" lengthAdjust="spacingAndGlyphs" fill="#000">1000</text>
<line x1="747" y1="280.00" x2="754" y2="280.00" stroke="#000" stroke-width="1.60"/>
<text x="762.70" y="283.85" font-size="10.30" textLength="24.73" lengthAdjust="spacingAndGlyphs" fill="#000">1200</text>
<line x1="747" y1="135.00" x2="754" y2="135.00" stroke="#000" stroke-width="1.60"/>
<text x="762.70" y="138.85" font-size="10.30" textLength="24.73" lengthAdjust="spacingAndGlyphs" fill="#000">1400</text>
<path d="M911.10 232.60 L930.20 232.60 L930.20 119.30 L935.70 119.30 L935.70 137.60 L940.90 137.60 L940.90 148.90 L946.90 148.90 L946.90 153.00 L952.90 153.00 L952.90 156.00 L958.60 156.00 L958.60 158.10 L964.10 158.10 L964.10 160.10 L969.00 160.10 L969.00 163.80 L975.00 163.80 L975.00 169.00 L981.00 169.00 L981.00 179.00 L985.80 179.00 L985.80 211.90 L991.70 211.90 L991.70 232.60 L1185.00 232.60" fill="none" stroke="#0000ff" stroke-width="1.5"/>
<rect x="911.10" y="113.00" width="273.90" height="119.60" fill="none" stroke="#000" stroke-width="1.60"/>
<line x1="904.10" y1="232.70" x2="911.10" y2="232.70" stroke="#000" stroke-width="1.60"/>
<text x="889.42" y="236.55" font-size="10.30" textLength="6.18" lengthAdjust="spacingAndGlyphs" fill="#000">0</text>
<line x1="904.10" y1="199.90" x2="911.10" y2="199.90" stroke="#000" stroke-width="1.60"/>
<text x="889.42" y="203.75" font-size="10.30" textLength="6.18" lengthAdjust="spacingAndGlyphs" fill="#000">2</text>
<line x1="904.10" y1="166.90" x2="911.10" y2="166.90" stroke="#000" stroke-width="1.60"/>
<text x="889.42" y="170.75" font-size="10.30" textLength="6.18" lengthAdjust="spacingAndGlyphs" fill="#000">4</text>
<line x1="904.10" y1="133.60" x2="911.10" y2="133.60" stroke="#000" stroke-width="1.60"/>
<text x="889.42" y="137.45" font-size="10.30" textLength="6.18" lengthAdjust="spacingAndGlyphs" fill="#000">6</text>
<line x1="933.90" y1="232.60" x2="933.90" y2="239.60" stroke="#000" stroke-width="1.60"/>
<text x="930.81" y="255.90" font-size="10.30" textLength="6.18" lengthAdjust="spacingAndGlyphs" fill="#000">0</text>
<line x1="973.35" y1="232.60" x2="973.35" y2="239.60" stroke="#000" stroke-width="1.60"/>
<line x1="1012.80" y1="232.60" x2="1012.80" y2="239.60" stroke="#000" stroke-width="1.60"/>
<text x="997.34" y="255.90" font-size="10.30" textLength="30.92" lengthAdjust="spacingAndGlyphs" fill="#000">20000</text>
<line x1="1052.25" y1="232.60" x2="1052.25" y2="239.60" stroke="#000" stroke-width="1.60"/>
<line x1="1091.70" y1="232.60" x2="1091.70" y2="239.60" stroke="#000" stroke-width="1.60"/>
<text x="1076.24" y="255.90" font-size="10.30" textLength="30.92" lengthAdjust="spacingAndGlyphs" fill="#000">40000</text>
<line x1="1131.15" y1="232.60" x2="1131.15" y2="239.60" stroke="#000" stroke-width="1.60"/>
<line x1="1170.60" y1="232.60" x2="1170.60" y2="239.60" stroke="#000" stroke-width="1.60"/>
<text x="1155.14" y="255.90" font-size="10.30" textLength="30.92" lengthAdjust="spacingAndGlyphs" fill="#000">60000</text>
<text x="1031.36" y="273.80" font-size="10.55" textLength="33.29" lengthAdjust="spacingAndGlyphs" fill="#000">counts</text>
<g transform="translate(878.10 173.50) rotate(-90)"><text x="-35.32" y="0" font-size="10.91" textLength="70.64" lengthAdjust="spacingAndGlyphs" fill="#000">log frequency</text></g>
<g transform="translate(1194.40 175.00) rotate(90)"><text x="-46.24" y="0" font-size="10.91" textLength="92.48" lengthAdjust="spacingAndGlyphs" fill="#000">histogram (detail)</text></g>
<path d="M911.10 404.80 L925.20 404.80 L925.20 290.80 L929.60 290.80 L929.60 305.70 L935.90 305.70 L935.90 320.60 L941.20 320.60 L941.20 324.50 L946.70 324.50 L946.70 327.80 L952.70 327.80 L952.70 329.80 L958.00 329.80 L958.00 332.60 L963.60 332.60 L963.60 336.50 L968.80 336.50 L968.80 342.80 L974.80 342.80 L974.80 358.90 L980.80 358.90 L980.80 404.80 L1185.00 404.80" fill="none" stroke="#0000ff" stroke-width="1.5"/>
<rect x="911.10" y="285.00" width="273.90" height="119.80" fill="none" stroke="#000" stroke-width="1.60"/>
<line x1="904.10" y1="404.90" x2="911.10" y2="404.90" stroke="#000" stroke-width="1.60"/>
<text x="889.42" y="408.75" font-size="10.30" textLength="6.18" lengthAdjust="spacingAndGlyphs" fill="#000">0</text>
<line x1="904.10" y1="371.90" x2="911.10" y2="371.90" stroke="#000" stroke-width="1.60"/>
<text x="889.42" y="375.75" font-size="10.30" textLength="6.18" lengthAdjust="spacingAndGlyphs" fill="#000">2</text>
<line x1="904.10" y1="338.60" x2="911.10" y2="338.60" stroke="#000" stroke-width="1.60"/>
<text x="889.42" y="342.45" font-size="10.30" textLength="6.18" lengthAdjust="spacingAndGlyphs" fill="#000">4</text>
<line x1="904.10" y1="304.90" x2="911.10" y2="304.90" stroke="#000" stroke-width="1.60"/>
<text x="889.42" y="308.75" font-size="10.30" textLength="6.18" lengthAdjust="spacingAndGlyphs" fill="#000">6</text>
<line x1="929.20" y1="404.80" x2="929.20" y2="411.80" stroke="#000" stroke-width="1.60"/>
<text x="926.11" y="428.10" font-size="10.30" textLength="6.18" lengthAdjust="spacingAndGlyphs" fill="#000">0</text>
<line x1="966.52" y1="404.80" x2="966.52" y2="411.80" stroke="#000" stroke-width="1.60"/>
<line x1="1003.84" y1="404.80" x2="1003.84" y2="411.80" stroke="#000" stroke-width="1.60"/>
<text x="988.38" y="428.10" font-size="10.30" textLength="30.92" lengthAdjust="spacingAndGlyphs" fill="#000">20000</text>
<line x1="1041.16" y1="404.80" x2="1041.16" y2="411.80" stroke="#000" stroke-width="1.60"/>
<line x1="1078.48" y1="404.80" x2="1078.48" y2="411.80" stroke="#000" stroke-width="1.60"/>
<text x="1063.02" y="428.10" font-size="10.30" textLength="30.92" lengthAdjust="spacingAndGlyphs" fill="#000">40000</text>
<line x1="1115.80" y1="404.80" x2="1115.80" y2="411.80" stroke="#000" stroke-width="1.60"/>
<line x1="1153.12" y1="404.80" x2="1153.12" y2="411.80" stroke="#000" stroke-width="1.60"/>
<text x="1137.66" y="428.10" font-size="10.30" textLength="30.92" lengthAdjust="spacingAndGlyphs" fill="#000">60000</text>
<text x="1031.36" y="446.00" font-size="10.55" textLength="33.29" lengthAdjust="spacingAndGlyphs" fill="#000">counts</text>
<g transform="translate(878.10 344.90) rotate(-90)"><text x="-35.32" y="0" font-size="10.91" textLength="70.64" lengthAdjust="spacingAndGlyphs" fill="#000">log frequency</text></g>
<g transform="translate(1194.40 349.10) rotate(90)"><text x="-39.70" y="0" font-size="10.91" textLength="79.40" lengthAdjust="spacingAndGlyphs" fill="#000">histogram (full)</text></g>
<rect x="911.10" y="517.00" width="273.90" height="120.00" fill="none" stroke="#000" stroke-width="1.60"/>
<line x1="904.10" y1="627.00" x2="911.10" y2="627.00" stroke="#000" stroke-width="1.60"/>
<text x="889.42" y="630.85" font-size="10.30" textLength="6.18" lengthAdjust="spacingAndGlyphs" fill="#000">0</text>
<line x1="904.10" y1="592.30" x2="911.10" y2="592.30" stroke="#000" stroke-width="1.60"/>
<text x="864.68" y="596.15" font-size="10.30" textLength="30.92" lengthAdjust="spacingAndGlyphs" fill="#000">20000</text>
<line x1="904.10" y1="557.70" x2="911.10" y2="557.70" stroke="#000" stroke-width="1.60"/>
<text x="864.68" y="561.55" font-size="10.30" textLength="30.92" lengthAdjust="spacingAndGlyphs" fill="#000">40000</text>
<line x1="904.10" y1="523.00" x2="911.10" y2="523.00" stroke="#000" stroke-width="1.60"/>
<text x="864.68" y="526.85" font-size="10.30" textLength="30.92" lengthAdjust="spacingAndGlyphs" fill="#000">60000</text>
<line x1="911.70" y1="637.00" x2="911.70" y2="644.00" stroke="#000" stroke-width="1.60"/>
<text x="908.61" y="660.30" font-size="10.30" textLength="6.18" lengthAdjust="spacingAndGlyphs" fill="#000">0</text>
<line x1="976.25" y1="637.00" x2="976.25" y2="644.00" stroke="#000" stroke-width="1.60"/>
<text x="966.97" y="660.30" font-size="10.30" textLength="18.56" lengthAdjust="spacingAndGlyphs" fill="#000">500</text>
<line x1="1040.80" y1="637.00" x2="1040.80" y2="644.00" stroke="#000" stroke-width="1.60"/>
<text x="1028.43" y="660.30" font-size="10.30" textLength="24.73" lengthAdjust="spacingAndGlyphs" fill="#000">1000</text>
<line x1="1105.35" y1="637.00" x2="1105.35" y2="644.00" stroke="#000" stroke-width="1.60"/>
<text x="1092.98" y="660.30" font-size="10.30" textLength="24.73" lengthAdjust="spacingAndGlyphs" fill="#000">1500</text>
<line x1="1169.90" y1="637.00" x2="1169.90" y2="644.00" stroke="#000" stroke-width="1.60"/>
<text x="1157.53" y="660.30" font-size="10.30" textLength="24.73" lengthAdjust="spacingAndGlyphs" fill="#000">2000</text>
<text x="1044.67" y="678.00" font-size="10.30" textLength="6.66" lengthAdjust="spacingAndGlyphs" fill="#000">X</text>
<g transform="translate(853.20 578.00) rotate(-90)"><text x="-16.64" y="0" font-size="10.55" textLength="33.29" lengthAdjust="spacingAndGlyphs" fill="#000">counts</text></g>
<g transform="translate(1194.10 575.20) rotate(90)"><text x="-19.13" y="0" font-size="10.91" textLength="38.26" lengthAdjust="spacingAndGlyphs" fill="#000">cut in x</text></g>
<path d="M911.8 624.8 949.3 624.8 949.5 624.8 949.7 624.8 949.9 624.8 950.1 624.8 950.3 624.7 950.5 624.7 950.7 624.6 950.9 624.5 951.1 624.3 951.3 624.2 951.5 624.0 951.7 624.0 951.9 624.0 952.1 624.2 952.3 624.3 952.5 624.5 952.7 624.6 952.9 624.7 953.1 624.7 953.3 624.8 953.5 624.8 953.7 624.8 953.9 624.8 954.1 624.8 968.5 624.8 968.7 624.8 968.9 624.8 969.0 624.7 969.2 624.6 969.4 624.3 969.6 623.9 969.8 623.1 970.0 622.0 970.1 620.6 970.3 619.3 970.5 618.3 970.7 618.0 970.9 618.3 971.1 619.3 971.2 620.6 971.4 622.0 971.6 623.1 971.8 623.9 972.0 624.3 972.2 624.6 972.4 624.7 972.5 624.8 972.7 624.8 972.9 624.8 987.3 624.8 987.5 624.8 987.7 624.8 987.9 624.7 988.0 624.5 988.2 624.1 988.4 623.4 988.6 622.2 988.8 620.4 989.0 618.3 989.1 616.3 989.3 614.7 989.5 614.1 989.7 614.7 989.9 616.3 990.0 618.3 990.2 620.4 990.4 622.2 990.6 623.4 990.8 624.1 991.0 624.5 991.1 624.7 991.3 624.8 991.5 624.8 991.7 624.8 1005.1 624.8 1005.3 624.8 1005.5 624.7 1005.6 624.6 1005.8 624.4 1006.0 623.8 1006.2 622.8 1006.4 621.2 1006.6 618.7 1006.8 615.9 1006.9 613.2 1007.1 611.0 1007.3 610.2 1007.5 611.0 1007.7 613.2 1007.9 615.9 1008.0 618.7 1008.2 621.2 1008.4 622.8 1008.6 623.8 1008.8 624.4 1009.0 624.6 1009.1 624.7 1009.3 624.8 1009.5 624.8 1021.8 624.8 1022.0 624.8 1022.2 624.7 1022.4 624.6 1022.5 624.3 1022.7 623.7 1022.9 622.6 1023.1 620.7 1023.3 618.0 1023.5 614.8 1023.6 611.6 1023.8 609.2 1024.0 608.3 1024.2 609.2 1024.4 611.6 1024.5 614.8 1024.7 618.0 1024.9 620.7 1025.1 622.6 1025.3 623.7 1025.5 624.3 1025.7 624.6 1025.8 624.7 1026.0 624.8 1026.2 624.8 1037.9 624.8 1038.1 624.8 1038.3 624.7 1038.5 624.6 1038.6 624.3 1038.8 623.5 1039.0 622.2 1039.2 620.1 1039.4 617.0 1039.5 613.3 1039.7 609.7 1039.9 606.9 1040.1 605.9 1040.3 606.9 1040.5 609.7 1040.7 613.3 1040.8 617.0 1041.0 620.1 1041.2 622.2 1041.4 623.5 1041.6 624.3 1041.8 624.6 1041.9 624.7 1042.1 624.8 1042.3 624.8 1052.9 624.8 1053.1 624.8 1053.3 624.7 1053.5 624.6 1053.6 624.2 1053.8 623.5 1054.0 622.1 1054.2 620.0 1054.4 616.7 1054.5 612.9 1054.7 609.2 1054.9 606.2 1055.1 605.2 1055.3 606.2 1055.5 609.2 1055.7 612.9 1055.8 616.7 1056.0 620.0 1056.2 622.1 1056.4 623.5 1056.6 624.2 1056.8 624.6 1056.9 624.7 1057.1 624.8 1057.3 624.8 1067.1 624.8 1067.3 624.8 1067.5 624.7 1067.7 624.6 1067.8 624.2 1068.0 623.4 1068.2 622.0 1068.4 619.8 1068.6 616.3 1068.8 612.4 1068.9 608.5 1069.1 605.5 1069.3 604.4 1069.5 605.5 1069.7 608.5 1069.8 612.4 1070.0 616.3 1070.2 619.8 1070.4 622.0 1070.6 623.4 1070.8 624.2 1071.0 624.6 1071.1 624.7 1071.3 624.8 1071.5 624.8 1080.8 624.8 1081.0 624.8 1081.2 624.7 1081.3 624.6 1081.5 624.2 1081.7 623.4 1081.9 622.0 1082.1 619.7 1082.3 616.2 1082.5 612.2 1082.6 608.3 1082.8 605.2 1083.0 604.1 1083.2 605.2 1083.4 608.3 1083.5 612.2 1083.7 616.2 1083.9 619.7 1084.1 622.0 1084.3 623.4 1084.5 624.2 1084.7 624.6 1084.8 624.7 1085.0 624.8 1085.2 624.8 1093.8 624.8 1094.0 624.8 1094.2 624.7 1094.3 624.6 1094.5 624.3 1094.7 623.5 1094.9 622.2 1095.1 620.1 1095.3 616.9 1095.5 613.2 1095.6 609.6 1095.8 606.7 1096.0 605.7 1096.2 606.7 1096.4 609.6 1096.5 613.2 1096.7 616.9 1096.9 620.1 1097.1 622.2 1097.3 623.5 1097.5 624.3 1097.7 624.6 1097.8 624.7 1098.0 624.8 1098.2 624.8 1106.0 624.8 1106.2 624.8 1106.4 624.7 1106.5 624.6 1106.7 624.3 1106.9 623.6 1107.1 622.5 1107.3 620.5 1107.5 617.6 1107.7 614.3 1107.8 611.0 1108.0 608.4 1108.2 607.5 1108.4 608.4 1108.6 611.0 1108.8 614.3 1108.9 617.6 1109.1 620.5 1109.3 622.5 1109.5 623.6 1109.7 624.3 1109.8 624.6 1110.0 624.7 1110.2 624.8 1110.4 624.8 1117.8 624.8 1118.0 624.8 1118.2 624.7 1118.3 624.6 1118.5 624.4 1118.7 623.8 1118.9 622.7 1119.1 621.0 1119.3 618.4 1119.5 615.4 1119.6 612.4 1119.8 610.1 1120.0 609.3 1120.2 610.1 1120.4 612.4 1120.5 615.4 1120.7 618.4 1120.9 621.0 1121.1 622.7 1121.3 623.8 1121.5 624.4 1121.7 624.6 1121.8 624.7 1122.0 624.8 1122.2 624.8 1128.8 624.8 1129.0 624.8 1129.2 624.8 1129.3 624.7 1129.5 624.5 1129.7 624.0 1129.9 623.2 1130.1 621.9 1130.3 620.0 1130.5 617.8 1130.6 615.5 1130.8 613.8 1131.0 613.2 1131.2 613.8 1131.4 615.5 1131.5 617.8 1131.7 620.0 1131.9 621.9 1132.1 623.2 1132.3 624.0 1132.5 624.5 1132.7 624.7 1132.8 624.8 1133.0 624.8 1133.2 624.8 1139.8 624.8 1140.0 624.8 1140.2 624.8 1140.3 624.7 1140.5 624.6 1140.7 624.4 1140.9 624.0 1141.1 623.4 1141.3 622.5 1141.5 621.4 1141.6 620.3 1141.8 619.5 1142.0 619.2 1142.2 619.5 1142.4 620.3 1142.5 621.4 1142.7 622.5 1142.9 623.4 1143.1 624.0 1143.3 624.4 1143.5 624.6 1143.7 624.7 1143.8 624.8 1144.0 624.8 1144.2 624.8 1149.9 624.8 1150.1 624.8 1150.3 624.8 1150.5 624.8 1150.6 624.7 1150.8 624.7 1151.0 624.5 1151.2 624.3 1151.4 624.0 1151.5 623.6 1151.7 623.3 1151.9 623.0 1152.1 622.9 1152.3 623.0 1152.5 623.3 1152.7 623.6 1152.8 624.0 1153.0 624.3 1153.2 624.5 1153.4 624.7 1153.6 624.7 1153.8 624.8 1153.9 624.8 1154.1 624.8 1154.3 624.8 1184.3 624.8" fill="none" stroke="#0000ff" stroke-width="1.5" stroke-linejoin="round"/><rect x="1108.9" y="519.9" width="73" height="16" rx="2" fill="#fff" fill-opacity="0.8" stroke="#d6d6d6" stroke-width="1"/><line x1="1111.2" y1="527.8" x2="1133.8" y2="527.8" stroke="#0000ff" stroke-width="1.5"/><text x="1138.30" y="531.20" font-size="10.30" textLength="38.63" lengthAdjust="spacingAndGlyphs" fill="#000">y=2000</text>
<rect x="911.10" y="688.50" width="273.90" height="120.00" fill="none" stroke="#000" stroke-width="1.60"/>
<line x1="904.10" y1="798.60" x2="911.10" y2="798.60" stroke="#000" stroke-width="1.60"/>
<text x="889.42" y="802.45" font-size="10.30" textLength="6.18" lengthAdjust="spacingAndGlyphs" fill="#000">0</text>
<line x1="904.10" y1="764.20" x2="911.10" y2="764.20" stroke="#000" stroke-width="1.60"/>
<text x="864.68" y="768.05" font-size="10.30" textLength="30.92" lengthAdjust="spacingAndGlyphs" fill="#000">20000</text>
<line x1="904.10" y1="729.80" x2="911.10" y2="729.80" stroke="#000" stroke-width="1.60"/>
<text x="864.68" y="733.65" font-size="10.30" textLength="30.92" lengthAdjust="spacingAndGlyphs" fill="#000">40000</text>
<line x1="904.10" y1="695.40" x2="911.10" y2="695.40" stroke="#000" stroke-width="1.60"/>
<text x="864.68" y="699.25" font-size="10.30" textLength="30.92" lengthAdjust="spacingAndGlyphs" fill="#000">60000</text>
<line x1="911.20" y1="808.50" x2="911.20" y2="815.50" stroke="#000" stroke-width="1.60"/>
<text x="908.11" y="831.80" font-size="10.30" textLength="6.18" lengthAdjust="spacingAndGlyphs" fill="#000">0</text>
<line x1="979.60" y1="808.50" x2="979.60" y2="815.50" stroke="#000" stroke-width="1.60"/>
<text x="967.23" y="831.80" font-size="10.30" textLength="24.73" lengthAdjust="spacingAndGlyphs" fill="#000">1000</text>
<line x1="1048.00" y1="808.50" x2="1048.00" y2="815.50" stroke="#000" stroke-width="1.60"/>
<text x="1035.63" y="831.80" font-size="10.30" textLength="24.73" lengthAdjust="spacingAndGlyphs" fill="#000">2000</text>
<line x1="1116.40" y1="808.50" x2="1116.40" y2="815.50" stroke="#000" stroke-width="1.60"/>
<text x="1104.03" y="831.80" font-size="10.30" textLength="24.73" lengthAdjust="spacingAndGlyphs" fill="#000">3000</text>
<line x1="1184.80" y1="808.50" x2="1184.80" y2="815.50" stroke="#000" stroke-width="1.60"/>
<text x="1172.43" y="831.80" font-size="10.30" textLength="24.73" lengthAdjust="spacingAndGlyphs" fill="#000">4000</text>
<text x="1045.71" y="849.50" font-size="10.30" textLength="5.98" lengthAdjust="spacingAndGlyphs" fill="#000">Y</text>
<g transform="translate(853.20 749.00) rotate(-90)"><text x="-16.64" y="0" font-size="10.55" textLength="33.29" lengthAdjust="spacingAndGlyphs" fill="#000">counts</text></g>
<g transform="translate(1194.10 749.20) rotate(90)"><text x="-19.13" y="0" font-size="10.91" textLength="38.26" lengthAdjust="spacingAndGlyphs" fill="#000">cut in y</text></g>
<path d="M911.8 796.9 943.0 796.9 943.4 796.9 943.9 796.9 944.3 796.9 944.7 796.8 945.2 796.7 945.6 796.6 946.0 796.3 946.5 796.0 946.9 795.5 947.3 795.1 947.8 794.7 948.2 794.6 948.6 794.7 949.1 795.1 949.5 795.5 949.9 796.0 950.4 796.3 950.8 796.6 951.2 796.7 951.7 796.8 952.1 796.9 952.5 796.9 953.0 796.9 953.4 796.9 991.5 796.9 992.1 796.9 992.7 796.9 993.3 796.8 993.9 796.6 994.5 796.2 995.1 795.5 995.7 794.4 996.3 792.7 996.9 790.7 997.5 788.7 998.1 787.3 998.7 786.7 999.3 787.3 999.9 788.7 1000.5 790.7 1001.1 792.7 1001.7 794.4 1002.3 795.5 1002.9 796.2 1003.5 796.6 1004.1 796.8 1004.7 796.9 1005.3 796.9 1005.9 796.9 1150.7 796.9 1151.3 796.9 1151.9 796.9 1152.5 796.8 1153.1 796.6 1153.7 796.3 1154.3 795.7 1154.9 794.6 1155.5 793.2 1156.1 791.4 1156.7 789.6 1157.3 788.3 1157.9 787.8 1158.5 788.3 1159.1 789.6 1159.7 791.4 1160.3 793.2 1160.9 794.6 1161.5 795.7 1162.1 796.3 1162.7 796.6 1163.3 796.8 1163.9 796.9 1164.5 796.9 1165.1 796.9 1184.3 796.9" fill="none" stroke="#0000ff" stroke-width="1.5" stroke-linejoin="round"/><rect x="1108.7" y="691.8" width="73.5" height="16.2" rx="2" fill="#fff" fill-opacity="0.8" stroke="#d6d6d6" stroke-width="1"/><line x1="1111.2" y1="699.7" x2="1133.8" y2="699.7" stroke="#0000ff" stroke-width="1.5"/><text x="1137.30" y="703.60" font-size="10.30" textLength="38.63" lengthAdjust="spacingAndGlyphs" fill="#000">x=1053</text></svg>
</body></html>
